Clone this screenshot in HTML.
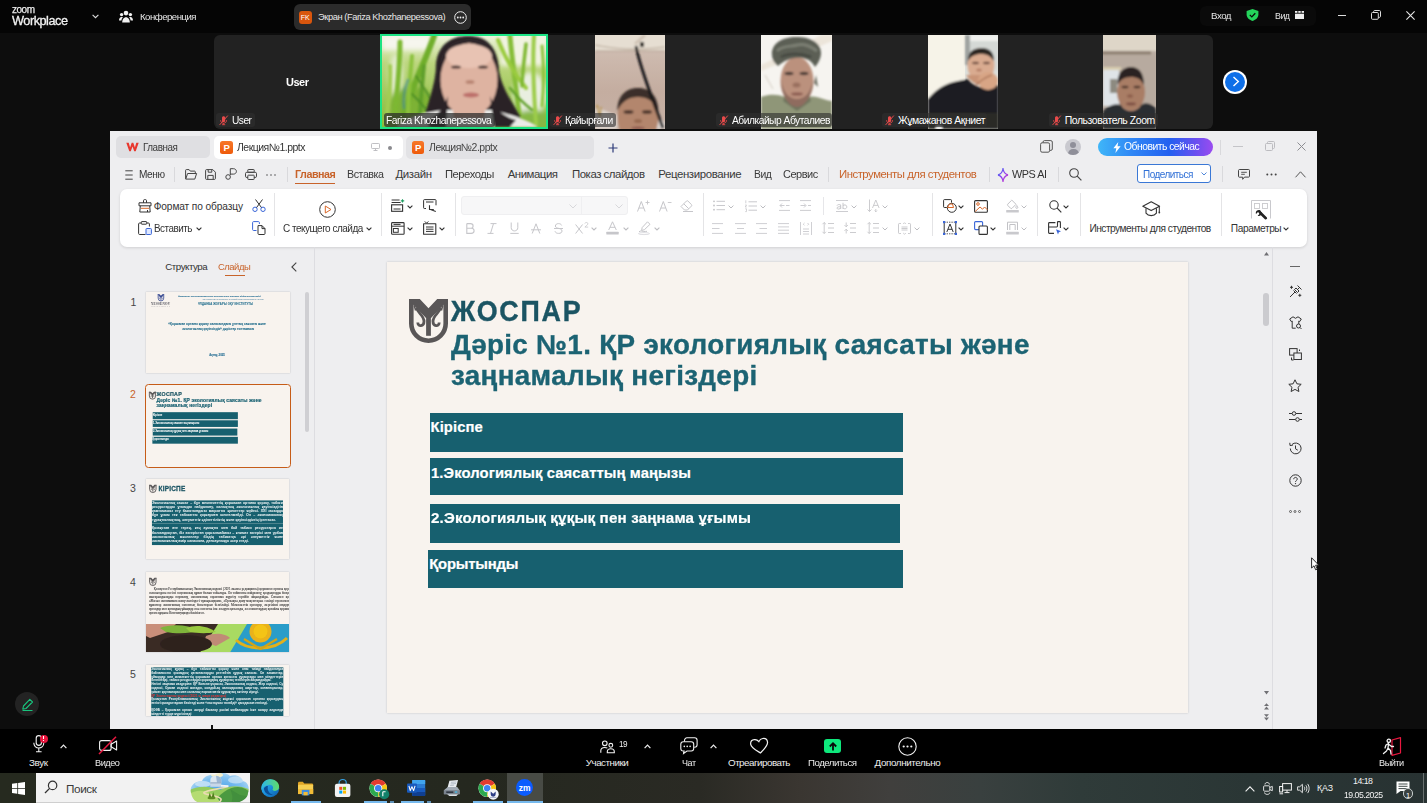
<!DOCTYPE html>
<html lang="ru">
<head>
<meta charset="utf-8">
<title>Zoom Workplace</title>
<style>
*{box-sizing:border-box;margin:0;padding:0}
html,body{width:1427px;height:803px;overflow:hidden;background:#0d0d0d;font-family:"Liberation Sans",sans-serif}
#root{position:relative;width:1427px;height:803px;overflow:hidden;background:#0d0d0d}
.a{position:absolute}
.t{position:absolute;white-space:nowrap;line-height:1;display:block}
svg{position:absolute;overflow:visible}
#topbar{position:absolute;left:0;top:0;width:1427px;height:33px;background:#050505}
#strip{position:absolute;left:214px;top:35px;width:999px;height:94px;background:#222;border-radius:6px}
.vid{position:absolute;top:0;height:94px;overflow:hidden}
.nm{position:absolute;top:78px;height:14px;background:rgba(47,47,47,.62);border-radius:3px}
#wps{position:absolute;left:110px;top:131px;width:1207px;height:598px;background:#eeeef0;overflow:hidden}
#ribbon{position:absolute;left:10px;top:58px;width:1187px;height:58px;background:#fff;border-radius:7px;box-shadow:0 1px 3px rgba(0,0,0,.13)}
.vs{position:absolute;width:1px;background:#e4e4e6}
#ztb{position:absolute;left:0;top:729px;width:1427px;height:44px;background:#000}
#tb{position:absolute;left:0;top:773px;width:1427px;height:30px;background:linear-gradient(90deg,#262a1f 0,#25281f 480px,#2a2a24 700px,#3a3631 800px,#403f3d 890px,#39403f 980px,#2f3b39 1080px,#2a3635 1250px,#283232 1427px)}
.ul{position:absolute;top:28px;height:2px;background:#76b9ed}
.th{position:absolute;left:146px;width:143.500px;height:80.500px;background:#f8f3ee;overflow:hidden;box-shadow:0 0 1.500px rgba(0,0,0,.22)}
.th>.in{position:absolute;left:0;top:0;width:800px;height:450px;transform:scale(.18);transform-origin:0 0}
.th .p{position:absolute;white-space:nowrap;line-height:1}
.th .blk{position:absolute;background:#17606f;color:#eef4f5;font-weight:700;font-size:19.500px;line-height:23.800px;text-align:justify;overflow:hidden;-webkit-text-stroke:.15px #eef4f5}
.th .blk p{text-align-last:left}

</style>
</head>
<body>
<div id="root">
<div id="topbar">
<svg style="left:92px;top:14px" width="7" height="5" viewBox="0 0 7 5"><path d="M.6.8 3.5 3.7 6.4.8" fill="none" stroke="#ddd" stroke-width="1.1"/></svg>
<svg style="left:119px;top:10px" width="14" height="13" viewBox="0 0 14 13"><g fill="#f2f2f2"><circle cx="7" cy="3.1" r="2.3"/><circle cx="2.6" cy="4.6" r="1.7"/><circle cx="11.4" cy="4.6" r="1.7"/><path d="M3.2 12.6c0-3 1.5-5.300 3.800-5.300s3.800 2.300 3.800 5.300z"/><path d="M0 10.500c0-2.100 1-3.600 2.600-3.600.500 0 .9.100 1.300.4-.9 1-1.400 2.200-1.500 3.200z"/><path d="M14 10.500c0-2.100-1-3.600-2.600-3.600-.5 0-.9.100-1.300.4.900 1 1.400 2.200 1.500 3.200z"/></g></svg>
<div class="a" style="left:294px;top:4px;width:177px;height:26px;background:#2b2b2b;border-radius:6px"></div>
<div class="a" style="left:299px;top:11px;width:12.5px;height:12.5px;background:#d9560d;border-radius:3px"></div>
<svg style="left:454px;top:10.500px" width="13" height="13" viewBox="0 0 13 13"><circle cx="6.500" cy="6.500" r="5.800" fill="none" stroke="#f0f0f0" stroke-width="1"/><g fill="#f0f0f0"><circle cx="3.800" cy="6.500" r=".9"/><circle cx="6.500" cy="6.500" r=".9"/><circle cx="9.200" cy="6.500" r=".9"/></g></svg>
<div class="a" style="left:1200px;top:6px;width:116px;height:20px;background:#0a0a0a;border-radius:6px"></div>
<svg style="left:1246px;top:9px" width="13" height="12" viewBox="0 0 13 12"><path d="M6.500 0 12.400 2v3.600c0 3-2.400 5.300-5.900 6.400C3 10.900.6 8.600.6 5.600V2z" fill="#24d35b"/><path d="M3.800 5.900 5.800 7.900 9.300 4.200" fill="none" stroke="#0a0a0a" stroke-width="1.300"/></svg>
<svg style="left:1295px;top:11px" width="9" height="8" viewBox="0 0 9 8"><g fill="#eee"><rect x="0" y="0" width="2.400" height="1.800"/><rect x="3.300" y="0" width="2.400" height="1.800"/><rect x="6.600" y="0" width="2.400" height="1.800"/><rect x="0" y="2.700" width="9" height="5.300"/></g></svg>
<div class="a" style="left:1338px;top:14.500px;width:8px;height:1px;background:#ddd"></div>
<svg style="left:1371px;top:10px" width="10" height="10" viewBox="0 0 10 10"><rect x=".5" y="2.500" width="6.800" height="6.800" rx="1" fill="none" stroke="#ddd"/><path d="M2.600 2.400V1.600c0-.6.500-1.100 1.100-1.100h4.700c.6 0 1.100.5 1.100 1.100v4.700c0 .6-.5 1.100-1.100 1.100h-.9" fill="none" stroke="#ddd"/></svg>
<svg style="left:1405.500px;top:10.500px" width="9" height="9" viewBox="0 0 9 9"><path d="M.4.400 8.600 8.600M8.600.4.400 8.600" stroke="#e8e8e8" stroke-width="1.100"/></svg>
</div>

<div id="strip">
<!-- tile 2: Fariza (active speaker) : strip-relative x 166..334 -->
<div class="a" style="left:166px;top:-1px;width:168px;height:95px;background:#1be384;overflow:hidden">
<svg style="left:2px;top:2px" width="164" height="91" viewBox="0 0 164 91">
<defs><filter id="b2" x="-10%" y="-10%" width="120%" height="120%"><feGaussianBlur stdDeviation="1.3"/></filter>
<filter id="b2b" x="-10%" y="-10%" width="120%" height="120%"><feGaussianBlur stdDeviation="2.600"/></filter>
<linearGradient id="g2" x1="0" y1="0" x2="0" y2="1"><stop offset="0" stop-color="#eef3dc"/><stop offset=".3" stop-color="#bcd67e"/><stop offset="1" stop-color="#86ba38"/></linearGradient>
<clipPath id="c2"><rect width="164" height="91"/></clipPath></defs>
<g clip-path="url(#c2)">
<rect width="164" height="91" fill="url(#g2)"/>
<g filter="url(#b2b)">
<rect x="0" y="0" width="48" height="14" fill="#f6f6ee"/>
<rect x="118" y="0" width="46" height="30" fill="#f1f3e2"/>
<ellipse cx="148" cy="58" rx="17" ry="22" fill="#e9efe0"/>
<ellipse cx="14" cy="40" rx="7" ry="22" fill="#e4ecd0"/>
<ellipse cx="30" cy="70" rx="22" ry="20" fill="#7db235"/>
<ellipse cx="150" cy="84" rx="18" ry="10" fill="#86b845"/>
</g>
<g filter="url(#b2)" stroke-linecap="round" fill="none">
<path d="M52 0C44 24 30 50 22 78" stroke="#6fae2c" stroke-width="6"/>
<path d="M18 6C18 30 16 50 12 88" stroke="#7db832" stroke-width="5"/>
<path d="M42 30C40 50 38 66 38 88" stroke="#5e9f2a" stroke-width="4"/>
<path d="M128 0C130 24 134 50 138 88" stroke="#86bd38" stroke-width="5"/>
<path d="M152 0C150 30 152 60 154 88" stroke="#9ccc4a" stroke-width="4"/>
<path d="M30 20C28 44 26 60 26 80" stroke="#8cc23e" stroke-width="4"/>
<path d="M8 30C9 50 6 66 4 88" stroke="#a2cc52" stroke-width="4"/>
<path d="M34 40C42 52 48 60 52 70" stroke="#4f8f25" stroke-width="2"/>
<path d="M30 58C36 64 42 70 46 76" stroke="#4f8f25" stroke-width="2"/>
<path d="M22 72C20 58 24 50 26 44" stroke="#3f86a0" stroke-width="2.500" opacity=".6"/>
<path d="M116 4C124 24 134 40 144 52" stroke="#9acb3c" stroke-width="4"/>
<path d="M144 8C142 26 140 40 140 50" stroke="#7fb832" stroke-width="3.500"/>
<path d="M160 10C162 30 162 50 160 70" stroke="#8dc23a" stroke-width="3"/>
<path d="M128 52C134 60 140 66 150 74" stroke="#5f9f2a" stroke-width="2.500"/>
</g>
<g filter="url(#b2)">
<path d="M40 91C44 70 54 50 54 28 56 8 70 0 86 0 104 0 114 10 116 28 118 50 128 62 138 80L140 91z" fill="#2a2226"/>
<path d="M14 91C26 80 44 76 62 74L110 74C126 78 142 82 156 91z" fill="#ecebe8"/>
<path d="M70 66 72 82 102 82 104 66z" fill="#d5a692"/>
<ellipse cx="87" cy="44" rx="28.500" ry="37" fill="#deb3a1"/>
<path d="M57 34C58 12 70 3 87 3 104 3 116 12 117 34 112 18 100 8 87 7 74 8 62 18 57 34z" fill="#2e2529"/>
<ellipse cx="87" cy="20" rx="23" ry="12" fill="#e8c3b3"/>
<ellipse cx="74" cy="31" rx="5" ry="1.600" fill="#4a3632"/>
<ellipse cx="101" cy="31" rx="5" ry="1.600" fill="#4a3632"/>
<ellipse cx="88" cy="46" rx="4.500" ry="2" fill="#b98573"/>
<ellipse cx="89" cy="59" rx="8" ry="2.600" fill="#bd6f6a"/>
<path d="M108 60C112 72 120 80 134 84L128 91 112 91z" fill="#2a2226"/>
<path d="M66 60C62 72 56 80 44 86L48 91 64 91z" fill="#2a2226"/>
</g>
</g>
</svg>
</div>
<!-- tile 3 video: abs x 594.5..665 => rel 380.5 -->
<div class="vid" style="left:380.500px;width:70.500px;background:#cdbbb0">
<svg style="left:0;top:0" width="70.500" height="94" viewBox="0 0 70.500 94">
<defs><filter id="b3" x="-10%" y="-10%" width="120%" height="120%"><feGaussianBlur stdDeviation=".9"/></filter>
<linearGradient id="g3" x1="0" y1="0" x2="0" y2="1"><stop offset="0" stop-color="#d2c1b6"/><stop offset=".6" stop-color="#c4ada0"/><stop offset="1" stop-color="#c6b1a5"/></linearGradient></defs>
<rect width="70.500" height="94" fill="url(#g3)"/>
<g filter="url(#b3)">
<rect x="-2" y="-2" width="75" height="18" fill="#e6ded2"/>
<path d="M0 10C20 14 40 16 70 12" stroke="#b5a595" stroke-width="1" fill="none"/>
<path d="M0 16H70.500" stroke="#bfae9f" stroke-width="1.500"/>
<path d="M50 0 40 9" stroke="#cfc2b4" stroke-width="3"/>
<rect x="45" y="7" width="4" height="5" fill="#2a2522"/>
<path d="M0 74C6 72 12 78 22 80L22 94 0 94z" fill="#dcd3cc"/>
<path d="M2 70 4 80M6 72 5 82" stroke="#b7913a" stroke-width="1.500"/>
<path d="M52 80C60 78 66 84 70.500 88V94H50z" fill="#dad2ce"/>
<ellipse cx="43" cy="82" rx="20.500" ry="27" fill="#b3866d"/>
<path d="M22.500 76C22 60 32 53 43 53 54 53 63 60 63.500 76 59 66 52 62 43 62 34 62 27 66 22.500 76z" fill="#3a2e29"/>
<ellipse cx="33.500" cy="77" rx="5" ry="1.900" fill="#4f382f"/>
<ellipse cx="52" cy="77" rx="5" ry="1.900" fill="#4f382f"/>
<ellipse cx="43" cy="86" rx="4" ry="2" fill="#96694f"/>
<ellipse cx="43" cy="93" rx="7" ry="1.500" fill="#8e5a50"/>
<path d="M41 11C44 30 56 60 68 93" stroke="#141318" stroke-width="2.800" fill="none"/>
</g>
</svg>
</div>
<!-- tile 4 video: abs 761..832 => rel 547 -->
<div class="vid" style="left:547px;width:71px;background:#f4f1ed">
<svg style="left:0;top:0" width="71" height="94" viewBox="0 0 71 94">
<defs><filter id="b4" x="-10%" y="-10%" width="120%" height="120%"><feGaussianBlur stdDeviation=".9"/></filter></defs>
<rect width="71" height="94" fill="#f6f4f0"/>
<g filter="url(#b4)">
<path d="M0 36 30 24 71 6V0H60L0 30z" fill="#ece5da"/>
<path d="M4 40 12 54" stroke="#cfc8bd" stroke-width="1"/>
<path d="M0 62C10 58 20 60 24 62L48 62C56 60 64 66 71 66V94H0z" fill="#8f9678"/>
<path d="M22 66 36 76 50 66 48 60 24 60z" fill="#6f755e"/>
<ellipse cx="36" cy="46" rx="16.500" ry="24" fill="#bb917d"/>
<path d="M20 44C20 60 28 72 36 72 44 72 52 60 52 44 50 58 44 64 36 64 28 64 22 58 20 44z" fill="#8f6c5e"/>
<path d="M11 20C10 8 22 2 35 2 50 2 60 8 60 18 60 24 56 30 54 32 50 24 42 22 34 23 26 24 20 28 17 31 13 28 11 24 11 20z" fill="#5c5f55"/>
<path d="M16 16C22 10 30 12 36 10 44 8 50 12 56 16" stroke="#7c7f73" stroke-width="3" fill="none"/>
<path d="M20 22C28 18 40 18 50 22" stroke="#44473f" stroke-width="2.500" fill="none"/>
<ellipse cx="28" cy="38.500" rx="4.500" ry="1.700" fill="#4a3a34"/>
<ellipse cx="43" cy="38.500" rx="4.500" ry="1.700" fill="#4a3a34"/>
<ellipse cx="35.500" cy="50" rx="4" ry="2.500" fill="#9a6f5e"/>
<ellipse cx="36" cy="59" rx="6" ry="1.600" fill="#8a5a50"/>
<path d="M53 48 57 52 55 40z" fill="#6d6f63"/>
</g>
</svg>
</div>
<!-- tile 5 video: abs 927.5..998 => rel 713.5 -->
<div class="vid" style="left:713.500px;width:70.500px;background:#e6e3da">
<svg style="left:0;top:0" width="70.500" height="94" viewBox="0 0 70.500 94">
<defs><filter id="b5" x="-10%" y="-10%" width="120%" height="120%"><feGaussianBlur stdDeviation=".9"/></filter></defs>
<rect width="37" height="94" fill="#f5f1e6"/>
<rect x="37" width="34" height="94" fill="#dcdfdb"/>
<g filter="url(#b5)">
<rect x="0" y="0" width="36" height="70" fill="#f6f3e8"/>
<rect x="37" y="0" width="5" height="30" fill="#9fa3a0"/>
<rect x="42" y="0" width="29" height="6" fill="#f0f1ee"/>
<rect x="42" y="6" width="29" height="30" fill="#d5d9d6"/>
<ellipse cx="53" cy="30" rx="13.500" ry="17" fill="#d9ab90"/>
<path d="M40 26C40 16 46 13 54 13 62 13 66 18 66 26 62 20 58 19 53 19 47 19 43 21 40 26z" fill="#2c2624"/>
<ellipse cx="47.500" cy="28" rx="3.500" ry="1.200" fill="#6b4a3c"/>
<ellipse cx="58.500" cy="28" rx="3.500" ry="1.200" fill="#6b4a3c"/>
<ellipse cx="51" cy="35" rx="2.800" ry="1.600" fill="#b57e66"/>
<path d="M0 64C8 54 18 48 30 46L40 44C44 50 52 54 60 52L70.500 50V94H0z" fill="#1f1f22"/>
<path d="M38 40C42 46 50 52 58 50L56 40z" fill="#c99477"/>
<ellipse cx="60" cy="46" rx="10" ry="9" fill="#d8a585"/>
<path d="M48 50C52 46 58 42 64 40" stroke="#b07a5f" stroke-width="1.500" fill="none"/>
<rect x="0" y="78" width="70.500" height="16" fill="#2a2b26"/>
<rect x="8" y="91" width="6" height="3" fill="#e8e8e8"/>
</g>
</svg>
</div>
<!-- tile 6 video: abs 1103..1156 => rel 889 -->
<div class="vid" style="left:889px;width:53px;background:#b8ab9f">
<svg style="left:0;top:0" width="53" height="94" viewBox="0 0 53 94">
<defs><filter id="b6" x="-10%" y="-10%" width="120%" height="120%"><feGaussianBlur stdDeviation=".8"/></filter></defs>
<rect width="53" height="94" fill="#b9aca1"/>
<g filter="url(#b6)">
<rect x="-2" y="-2" width="57" height="18" fill="#ded6c8"/>
<rect x="-2" y="16" width="50" height="3.500" fill="#8f8172"/>
<rect x="0" y="20" width="53" height="50" fill="#b7aa9f"/>
<rect x="0" y="32" width="18" height="3" fill="#d8cdb0"/>
<rect x="0" y="35" width="16" height="36" fill="#dfe4e8"/>
<rect x="7" y="44" width="7" height="14" fill="#8d8a80"/>
<ellipse cx="28" cy="57" rx="14" ry="19" fill="#a97d65"/>
<path d="M14.500 50C14 38 20 32 28 32 36 32 41 38 41 50 38 44 34 42 28 42 21 42 17 45 14.500 50z" fill="#2a2321"/>
<ellipse cx="22" cy="52" rx="3.500" ry="1.300" fill="#4a3329"/>
<ellipse cx="34" cy="52" rx="3.500" ry="1.300" fill="#4a3329"/>
<ellipse cx="27" cy="61" rx="3" ry="1.800" fill="#8d5f4c"/>
<ellipse cx="28" cy="69" rx="5" ry="1.400" fill="#7c4d42"/>
<path d="M0 76C6 70 12 68 18 70 22 78 34 78 38 70 44 66 50 70 53 74V94H0z" fill="#2b2d33"/>
</g>
</svg>
</div>
<!-- name labels -->
<div class="nm" style="left:2px;width:39px"></div>
<div class="nm" style="left:169.500px;width:111px;background:rgba(40,40,40,.72)"></div>
<div class="nm" style="left:335.500px;width:66.500px"></div>
<div class="nm" style="left:502px;width:116px"></div>
<div class="nm" style="left:668px;width:105px"></div>
<div class="nm" style="left:835px;width:109px"></div>
<svg style="left:5px;top:80px" width="10" height="10" viewBox="0 0 10 10"><path d="M4.600 1.200c-.9 0-1.600.7-1.600 1.600v2.600c0 .9.700 1.600 1.600 1.600s1.600-.7 1.600-1.600V2.800c0-.9-.7-1.600-1.600-1.600z" fill="#e84a4a"/><path d="M1.600 5.200c0 1.700 1.300 3 3 3s3-1.300 3-3M4.600 8.200v1.400M3 9.700h3.200" stroke="#e84a4a" stroke-width=".9" fill="none"/><path d="M.6 9.900 8.800.6" stroke="#e84a4a" stroke-width="1"/></svg>
<svg style="left:338.500px;top:80px" width="10" height="10" viewBox="0 0 10 10"><path d="M4.600 1.200c-.9 0-1.600.7-1.600 1.600v2.600c0 .9.700 1.600 1.600 1.600s1.600-.7 1.600-1.600V2.800c0-.9-.7-1.600-1.600-1.600z" fill="#e84a4a"/><path d="M1.600 5.200c0 1.700 1.300 3 3 3s3-1.300 3-3M4.600 8.200v1.400M3 9.700h3.200" stroke="#e84a4a" stroke-width=".9" fill="none"/><path d="M.6 9.900 8.800.6" stroke="#e84a4a" stroke-width="1"/></svg>
<svg style="left:505px;top:80px" width="10" height="10" viewBox="0 0 10 10"><path d="M4.600 1.200c-.9 0-1.600.7-1.600 1.600v2.600c0 .9.700 1.600 1.600 1.600s1.600-.7 1.600-1.600V2.800c0-.9-.7-1.600-1.600-1.600z" fill="#e84a4a"/><path d="M1.600 5.200c0 1.700 1.300 3 3 3s3-1.300 3-3M4.600 8.200v1.400M3 9.700h3.200" stroke="#e84a4a" stroke-width=".9" fill="none"/><path d="M.6 9.900 8.800.6" stroke="#e84a4a" stroke-width="1"/></svg>
<svg style="left:671px;top:80px" width="10" height="10" viewBox="0 0 10 10"><path d="M4.600 1.200c-.9 0-1.600.7-1.600 1.600v2.600c0 .9.700 1.600 1.600 1.600s1.600-.7 1.600-1.600V2.800c0-.9-.7-1.600-1.600-1.600z" fill="#e84a4a"/><path d="M1.600 5.200c0 1.700 1.300 3 3 3s3-1.300 3-3M4.600 8.200v1.400M3 9.700h3.200" stroke="#e84a4a" stroke-width=".9" fill="none"/><path d="M.6 9.900 8.800.6" stroke="#e84a4a" stroke-width="1"/></svg>
<svg style="left:838px;top:80px" width="10" height="10" viewBox="0 0 10 10"><path d="M4.600 1.200c-.9 0-1.600.7-1.600 1.600v2.600c0 .9.700 1.600 1.600 1.600s1.600-.7 1.600-1.600V2.800c0-.9-.7-1.600-1.600-1.600z" fill="#e84a4a"/><path d="M1.600 5.200c0 1.700 1.300 3 3 3s3-1.300 3-3M4.600 8.200v1.400M3 9.700h3.200" stroke="#e84a4a" stroke-width=".9" fill="none"/><path d="M.6 9.900 8.800.6" stroke="#e84a4a" stroke-width="1"/></svg>
</div>
<!-- next arrow -->
<div class="a" style="left:1223px;top:69.500px;width:24px;height:24px;border-radius:12px;background:#fff"></div>
<div class="a" style="left:1225px;top:71.500px;width:20px;height:20px;border-radius:10px;background:#0e6fe8"></div>
<svg style="left:1232px;top:76px" width="8" height="11" viewBox="0 0 8 11"><path d="M1.500 1 6.300 5.500 1.500 10" fill="none" stroke="#fff" stroke-width="1.400"/></svg>

<div id="wps">
<!-- tabs (coords relative to wps: abs-110, abs-131) -->
<div class="a" style="left:6px;top:5px;width:94px;height:22px;background:#dfdfe2;border-radius:5px"></div>
<svg style="left:15.500px;top:10.500px" width="13" height="10" viewBox="0 0 13 10"><path d="M.3.800 3.300 9.200 4.800 9.200 6.500 4.400 8.200 9.200 9.700 9.200 12.700.8 10.300.8 8.900 5.600 7.300.8 5.700.8 4.100 5.600 2.700.8z" fill="#e8382e"/></svg>
<div class="a" style="left:104px;top:5px;width:188.500px;height:23px;background:#fff;border-radius:5px"></div>
<div class="a" style="left:110.300px;top:10.300px;width:12.400px;height:12.400px;border-radius:2.500px;background:linear-gradient(180deg,#f7782a,#ee5a0a)"></div>
<svg style="left:261px;top:12px" width="9" height="8" viewBox="0 0 9 8"><rect x=".5" y=".5" width="8" height="5" rx=".8" fill="none" stroke="#b9b9bd" stroke-width=".9"/><path d="M2.500 7.500h4M4.500 5.500v2" stroke="#b9b9bd" stroke-width=".9"/></svg>
<div class="a" style="left:277.500px;top:14.500px;width:4px;height:4px;border-radius:2px;background:#8a8a8e"></div>
<div class="a" style="left:296px;top:5px;width:188px;height:22.500px;background:#e2e2e5;border-radius:5px"></div>
<div class="a" style="left:301.800px;top:10.300px;width:12.400px;height:12.400px;border-radius:2.500px;background:linear-gradient(180deg,#f7782a,#ee5a0a)"></div>
<svg style="left:497.500px;top:12px" width="10" height="10" viewBox="0 0 10 10"><path d="M5 .5v9M.5 5h9" stroke="#2c3a78" stroke-width="1.200"/></svg>
<!-- right top controls -->
<svg style="left:930px;top:9px" width="13" height="13" viewBox="0 0 13 13"><rect x=".6" y="2.800" width="9" height="9.400" rx="1.500" fill="none" stroke="#555" stroke-width="1"/><path d="M3 2.700V2c0-.8.600-1.400 1.400-1.400h6.500c.8 0 1.400.6 1.400 1.400v7c0 .8-.6 1.400-1.400 1.400h-1" fill="none" stroke="#555" stroke-width="1"/></svg>
<div class="a" style="left:955px;top:7.500px;width:16px;height:16px;border-radius:8px;background:#c9c9cf;overflow:hidden"><div class="a" style="left:5px;top:3px;width:6px;height:6.500px;border-radius:3px;background:#8f8f99"></div><div class="a" style="left:2.500px;top:10px;width:11px;height:9px;border-radius:5px 5px 0 0;background:#8f8f99"></div></div>
<div class="a" style="left:988px;top:7px;width:114.500px;height:18px;border-radius:9px;background:linear-gradient(90deg,#3fb6f8 0,#2f86f5 30%,#2360f0 62%,#6a4ff0 85%,#9a4cf0 100%)"></div>
<svg style="left:1003px;top:10.500px" width="8" height="11" viewBox="0 0 8 11"><path d="M5.300 0 .4 6.200h2.900L2.400 11l5.200-6.700H4.500z" fill="#fff"/></svg>
<div class="vs" style="left:1110px;top:9px;height:15px;background:#d9d9dc"></div>
<div class="a" style="left:1123px;top:15px;width:10px;height:1px;background:#c4c4c8"></div>
<svg style="left:1155px;top:10px" width="10" height="10" viewBox="0 0 10 10"><rect x=".5" y="2.500" width="7" height="7" rx="1" fill="none" stroke="#bcbcc0"/><path d="M2.500 2.400V1.500c0-.6.400-1 1-1h5c.6 0 1 .4 1 1v5c0 .6-.4 1-1 1h-.9" fill="none" stroke="#bcbcc0"/></svg>
<svg style="left:1186.500px;top:10.500px" width="9" height="9" viewBox="0 0 9 9"><path d="M.5.500 8.500 8.500M8.500.5.500 8.500" stroke="#8d8d92" stroke-width="1"/></svg>
<!-- menu row (abs y center 174.5 => rel 43.5) -->
<svg style="left:15px;top:38.500px" width="8" height="10" viewBox="0 0 8 10"><path d="M.3.800h7.400M.3 5h7.400M.3 9.200h7.400" stroke="#444" stroke-width="1"/></svg>
<div class="vs" style="left:64px;top:36px;height:15px;background:#d9d9dc"></div>
<svg style="left:74.500px;top:37.500px" width="12" height="11" viewBox="0 0 12 11"><path d="M.6 9.800V1.300c0-.4.300-.7.700-.7h2.800l1.200 1.500h4.300c.4 0 .7.300.7.700V4" fill="none" stroke="#444" stroke-width="1"/><path d="M.7 10.100 2.600 4.500h9l-1.800 5.600z" fill="none" stroke="#444" stroke-width="1" stroke-linejoin="round"/></svg>
<svg style="left:95px;top:37.500px" width="11" height="11" viewBox="0 0 11 11"><path d="M.6 1.400c0-.4.300-.8.800-.8h6.400l2.600 2.600v6.400c0 .4-.4.800-.8.800H1.400c-.5 0-.8-.4-.8-.8z" fill="none" stroke="#444" stroke-width="1"/><path d="M2.800 10.200V6.400h5.400v3.800M3.200.8v2.400h3.600V.8" fill="none" stroke="#444" stroke-width="1"/></svg>
<svg style="left:115px;top:37px" width="12" height="12" viewBox="0 0 12 12"><path d="M5.300 7.200V.7h3.200c1.600 0 2.900 1.200 2.900 2.700s-1.300 2.700-2.900 2.700H5.300" fill="none" stroke="#444" stroke-width="1"/><circle cx="3.100" cy="9" r="2.300" fill="none" stroke="#444" stroke-width="1"/></svg>
<svg style="left:135px;top:37.500px" width="12" height="11" viewBox="0 0 12 11"><rect x="2.800" y=".5" width="6.400" height="2.800" rx=".6" fill="none" stroke="#444"/><rect x=".5" y="3.300" width="11" height="5.200" rx="1.300" fill="none" stroke="#444"/><rect x="2.800" y="6.200" width="6.400" height="4.300" rx=".6" fill="#edeef0" stroke="#444"/></svg>
<svg style="left:156px;top:42.500px" width="10" height="2" viewBox="0 0 10 2"><g fill="#555"><circle cx="1" cy="1" r=".8"/><circle cx="5" cy="1" r=".8"/><circle cx="9" cy="1" r=".8"/></g></svg>
<div class="vs" style="left:177px;top:36px;height:15px;background:#d9d9dc"></div>
<div class="a" style="left:185px;top:51.500px;width:40px;height:1.500px;background:#c8632a"></div>
<div class="vs" style="left:717.500px;top:36px;height:15px;background:#d9d9dc"></div>
<div class="vs" style="left:879px;top:36px;height:15px;background:#d9d9dc"></div>
<svg style="left:888px;top:36.500px" width="10" height="14" viewBox="0 0 12 14" preserveAspectRatio="none"><defs><linearGradient id="ai" x1="0" y1="0" x2="1" y2="1"><stop offset="0" stop-color="#3a7bf0"/><stop offset=".5" stop-color="#8a3cf0"/><stop offset="1" stop-color="#e040c0"/></linearGradient></defs><path d="M6 0C6.300 3.500 7.500 6 12 7 7.500 8 6.300 10.500 6 14 5.700 10.500 4.500 8 0 7 4.500 6 5.700 3.500 6 0z" fill="none" stroke="url(#ai)" stroke-width="1.300"/></svg>
<div class="vs" style="left:948px;top:36px;height:15px;background:#d9d9dc"></div>
<svg style="left:959px;top:36.500px" width="13" height="13" viewBox="0 0 13 13"><circle cx="5" cy="5" r="4.300" fill="none" stroke="#444" stroke-width="1.100"/><path d="M8.200 8.200 12.400 12.400" stroke="#444" stroke-width="1.200"/></svg>
<div class="a" style="left:1027px;top:33px;width:74px;height:19px;border:1px solid #3a78d6;border-radius:3px;background:#fff"></div>
<svg style="left:1090.500px;top:41px" width="6" height="4" viewBox="0 0 6 4"><path d="M.5.500 3 3 5.500.5" fill="none" stroke="#3a78d6" stroke-width=".9"/></svg>
<div class="vs" style="left:1112px;top:35px;height:16px;background:#d9d9dc"></div>
<svg style="left:1127.500px;top:37.500px" width="12" height="11" viewBox="0 0 12 11"><path d="M1.300.5h9.400c.5 0 .8.400.8.800v6c0 .5-.4.800-.8.800H6.500L4.700 10.300V8.200H1.300c-.5 0-.8-.4-.8-.8v-6c0-.5.400-.8.800-.8z" fill="none" stroke="#444" stroke-width="1"/><path d="M3.200 3.300h5.600M3.200 5.300h3.600" stroke="#444" stroke-width=".9"/></svg>
<svg style="left:1156px;top:42px" width="11" height="3" viewBox="0 0 11 3"><g fill="#444"><circle cx="1.300" cy="1.500" r="1"/><circle cx="5.500" cy="1.500" r="1"/><circle cx="9.700" cy="1.500" r="1"/></g></svg>
<svg style="left:1184.500px;top:39.500px" width="11" height="7" viewBox="0 0 11 7"><path d="M.5 6.300 5.500.8 10.500 6.300" fill="none" stroke="#555" stroke-width="1"/></svg>
<!-- ribbon -->
<div id="ribbon">
<!-- group 1: clipboard -->
<svg style="left:17.500px;top:10px" width="14" height="14" viewBox="0 0 14 14"><path d="M5.500 3.800V1.600c0-.6.400-1 1-1h1c.6 0 1 .4 1 1v2.200" fill="none" stroke="#333" stroke-width="1"/><path d="M1 3.800h12v3H1z" fill="none" stroke="#333" stroke-width="1" stroke-linejoin="round"/><path d="M2.300 6.800 1.800 13h10.400l-.5-6.200" fill="none" stroke="#333" stroke-width="1"/><path d="M3 9.300h8" stroke="#d9682a" stroke-width="1"/><path d="M9.500 11v2" stroke="#333" stroke-width="1"/></svg>
<svg style="left:132px;top:10px" width="14" height="13" viewBox="0 0 14 13"><path d="M3.500.5 9.800 9M10.500.5 4.200 9" stroke="#333" stroke-width="1"/><circle cx="3" cy="10.300" r="2.200" fill="none" stroke="#3a66d8" stroke-width="1"/><circle cx="11" cy="10.300" r="2.200" fill="none" stroke="#3a66d8" stroke-width="1"/></svg>
<svg style="left:18px;top:32px" width="14" height="14" viewBox="0 0 14 14"><path d="M3.300 2H1.600c-.6 0-1 .4-1 1v9.500c0 .6.400 1 1 1h5.900M8.700 2h1.700c.6 0 1 .4 1 1v2.500" fill="none" stroke="#333" stroke-width="1"/><rect x="3.300" y=".6" width="5.400" height="2.600" rx=".6" fill="none" stroke="#333" stroke-width="1"/><rect x="8" y="7.500" width="5.400" height="6" rx=".8" fill="#dfe8ff" stroke="#3a66d8" stroke-width="1"/></svg>
<svg style="left:76px;top:38px" width="6" height="4" viewBox="0 0 6 4"><path d="M.6.600 3 3 5.400.6" fill="none" stroke="#333" stroke-width="1.100"/></svg>
<svg style="left:132px;top:32px" width="14" height="14" viewBox="0 0 14 14"><path d="M4.500 9.500H1.500c-.5 0-.9-.4-.9-.9V1.500c0-.5.400-.9.900-.9h5c.5 0 .9.400.9.900V3" fill="none" stroke="#3a66d8" stroke-width="1"/><path d="M6 4.600h4l3 3v5c0 .5-.4.900-.9.900H6.900c-.5 0-.9-.4-.9-.9z" fill="none" stroke="#333" stroke-width="1" stroke-linejoin="round"/><path d="M10 4.600v3h3" fill="none" stroke="#333" stroke-width="1"/></svg>
<div class="vs" style="left:153.500px;top:4px;height:43px"></div>
<!-- group 2: play -->
<svg style="left:199px;top:12px" width="17" height="17" viewBox="0 0 17 17"><circle cx="8.500" cy="8.500" r="7.800" fill="none" stroke="#333" stroke-width="1"/><path d="M6.300 5 12 8.500 6.300 12z" fill="none" stroke="#d9682a" stroke-width="1" stroke-linejoin="round"/></svg>
<svg style="left:245.500px;top:38px" width="6" height="4" viewBox="0 0 6 4"><path d="M.6.600 3 3 5.400.6" fill="none" stroke="#333" stroke-width="1.100"/></svg>
<div class="vs" style="left:261px;top:4px;height:43px"></div>
<!-- group 3: slides -->
<svg style="left:271px;top:10px" width="14" height="13" viewBox="0 0 14 13"><path d="M.6 1h8M.6 3.500h9" stroke="#333" stroke-width="1"/><rect x=".6" y="5.800" width="11" height="6.500" fill="none" stroke="#333" stroke-width="1.100"/><path d="M2.500 10h7" stroke="#333" stroke-width="1"/><path d="M11.500.2v3.400M9.800 1.900h3.400" stroke="#1d9e62" stroke-width="1.100"/></svg>
<svg style="left:287px;top:15.500px" width="6" height="4" viewBox="0 0 6 4"><path d="M.6.600 3 3 5.400.6" fill="none" stroke="#333" stroke-width="1.100"/></svg>
<svg style="left:302.500px;top:10px" width="14" height="13" viewBox="0 0 14 13"><path d="M3 9.500H1.300c-.4 0-.7-.3-.7-.7V1.300c0-.4.300-.7.700-.7h11c.4 0 .7.300.7.700v5" fill="none" stroke="#333" stroke-width="1"/><path d="M3 3h7.500" stroke="#333" stroke-width="1"/><path d="M6.500 6.200v4.300h4.300M6.800 10.200l6 2.200" fill="none" stroke="#333" stroke-width="1.100"/></svg>
<svg style="left:271px;top:32.500px" width="14" height="13" viewBox="0 0 14 13"><rect x=".6" y=".6" width="12.500" height="11.600" rx=".8" fill="none" stroke="#333" stroke-width="1.100"/><path d="M.6 4.200h12.500M2.500 2.400h7" stroke="#333" stroke-width="1"/><rect x="2.400" y="6.500" width="4.800" height="3.800" fill="none" stroke="#333" stroke-width="1"/></svg>
<svg style="left:287px;top:38px" width="6" height="4" viewBox="0 0 6 4"><path d="M.6.600 3 3 5.400.6" fill="none" stroke="#333" stroke-width="1.100"/></svg>
<svg style="left:302.500px;top:32px" width="14" height="14" viewBox="0 0 14 14"><path d="M1.800.4 3.600 2.200 5.400.4" fill="none" stroke="#333" stroke-width="1"/><path d="M.6 2.800h12.200v10.500H.6z" fill="none" stroke="#333" stroke-width="1.100" stroke-linejoin="round"/><path d="M3 6h7.500M3 8.200h7.500M3 10.400h7.500" stroke="#333" stroke-width="1"/></svg>
<svg style="left:318.500px;top:38px" width="6" height="4" viewBox="0 0 6 4"><path d="M.6.600 3 3 5.400.6" fill="none" stroke="#333" stroke-width="1.100"/></svg>
<div class="vs" style="left:334.500px;top:4px;height:43px"></div>
<!-- group 4: font (disabled) -->
<div class="a" style="left:341px;top:7px;width:167px;height:19px;background:#f7f7f8;border:1px solid #efeff1;border-radius:3px"></div>
<div class="vs" style="left:460.500px;top:8px;height:17px;background:#efeff1"></div>
<svg style="left:449px;top:14.500px" width="8" height="5" viewBox="0 0 8 5"><path d="M.5.500 4 4 7.500.5" fill="none" stroke="#d8d8db" stroke-width="1"/></svg>
<svg style="left:495px;top:14.500px" width="8" height="5" viewBox="0 0 8 5"><path d="M.5.500 4 4 7.500.5" fill="none" stroke="#d8d8db" stroke-width="1"/></svg>
<g></g>
<svg style="left:516.500px;top:11px" width="13" height="12" viewBox="0 0 13 12"><path d="M.5 11.500 4.300 1.500 8.100 11.500M1.800 8h5" fill="none" stroke="#c6c6ca" stroke-width="1"/><path d="M10.500.5v4M8.500 2.500h4" stroke="#c6c6ca" stroke-width=".9"/></svg>
<svg style="left:538.500px;top:11px" width="13" height="12" viewBox="0 0 13 12"><path d="M.5 11.500 4.300 1.500 8.100 11.500M1.800 8h5" fill="none" stroke="#c6c6ca" stroke-width="1"/><path d="M8.800 2.500h3.700" stroke="#c6c6ca" stroke-width=".9"/></svg>
<svg style="left:559.500px;top:11px" width="14" height="12" viewBox="0 0 14 12"><path d="M1 6.500 6.500 1c.4-.4 1-.4 1.400 0l3.600 3.600c.4.400.4 1 0 1.400L7.500 10H4.500z" fill="none" stroke="#c6c6ca" stroke-width="1" stroke-linejoin="round"/><path d="M3.800 3.800 8.700 8.700M3 11.500h10" stroke="#c6c6ca" stroke-width="1"/></svg>
<svg style="left:345.500px;top:33.500px" width="9" height="11" viewBox="0 0 9 11"><path d="M.8.600V10.400h4.400c1.700 0 2.900-1 2.900-2.600S6.900 5.300 5.200 5.300H.8M.8.600h3.700c1.500 0 2.600.9 2.600 2.300S6 5.300 4.500 5.300" fill="none" stroke="#c6c6ca" stroke-width="1.100"/></svg>
<svg style="left:367px;top:33.500px" width="10" height="11" viewBox="0 0 10 11"><path d="M3.500.6h6M.5 10.400h6M6.500.6 3.500 10.400" stroke="#c6c6ca" stroke-width="1"/></svg>
<svg style="left:389.500px;top:33px" width="9" height="12" viewBox="0 0 9 12"><path d="M1.200.5v5.200c0 1.900 1.400 3.200 3.300 3.200s3.300-1.300 3.300-3.200V.5M.3 11.400h8.400" fill="none" stroke="#c6c6ca" stroke-width="1"/></svg>
<svg style="left:411px;top:33.500px" width="10" height="11" viewBox="0 0 10 11"><path d="M1.200 10.500 5 .8 8.800 10.500M0 6.800h10" fill="none" stroke="#c6c6ca" stroke-width="1"/></svg>
<svg style="left:433.500px;top:33.500px" width="9" height="11" viewBox="0 0 9 11"><path d="M7.600 2.400C7.200 1.200 6 .6 4.500.6 2.700.6 1.400 1.500 1.400 3c0 3.200 6.600 1.500 6.600 5 0 1.600-1.400 2.400-3.400 2.400-1.800 0-3.100-.7-3.600-2.100M0 5.500h9" fill="none" stroke="#c6c6ca" stroke-width="1"/></svg>
<svg style="left:454.500px;top:33px" width="14" height="12" viewBox="0 0 14 12"><path d="M.6 2.500 7.600 11.500M7.600 2.500.6 11.500" stroke="#c6c6ca" stroke-width="1"/><path d="M9.800 1.500c.3-.7.900-1 1.600-1 .9 0 1.500.5 1.500 1.300 0 1.200-1.700 1.700-3 3.300h3.300" fill="none" stroke="#c6c6ca" stroke-width=".8"/></svg>
<svg style="left:470.500px;top:38px" width="6" height="4" viewBox="0 0 6 4"><path d="M.6.600 3 3 5.400.6" fill="none" stroke="#bdbdc1" stroke-width="1.100"/></svg>
<svg style="left:485.500px;top:32px" width="13" height="14" viewBox="0 0 13 14"><path d="M2.700 9 6.500.8 10.300 9M4 6.300h5" fill="none" stroke="#c6c6ca" stroke-width="1"/><rect x=".3" y="10.800" width="12.400" height="2.600" rx=".5" fill="#c6c6ca"/></svg>
<svg style="left:502.500px;top:38px" width="6" height="4" viewBox="0 0 6 4"><path d="M.6.600 3 3 5.400.6" fill="none" stroke="#bdbdc1" stroke-width="1.100"/></svg>
<svg style="left:518px;top:32px" width="14" height="14" viewBox="0 0 14 14"><path d="M9.500.8 12 3.300 6.300 8.800 3.600 9.400 4.200 6.500z" fill="none" stroke="#c6c6ca" stroke-width="1" stroke-linejoin="round"/><path d="M1 10.800c1.600-1.500 3-.5 4.200-.2 1.500.4 3-.6 3.800-.3" fill="none" stroke="#c6c6ca" stroke-width="1"/><ellipse cx="6" cy="12.600" rx="5.500" ry="1" fill="none" stroke="#d6d6da" stroke-width=".8"/></svg>
<svg style="left:533.500px;top:38px" width="6" height="4" viewBox="0 0 6 4"><path d="M.6.600 3 3 5.400.6" fill="none" stroke="#bdbdc1" stroke-width="1.100"/></svg>
<div class="vs" style="left:582.500px;top:4px;height:43px"></div>
<!-- group 5: paragraph (disabled) -->
<svg style="left:593px;top:11px" width="12" height="11" viewBox="0 0 12 11"><g fill="#c2c2c6"><circle cx="1" cy="1.300" r=".9"/><circle cx="1" cy="5.500" r=".9"/><circle cx="1" cy="9.700" r=".9"/></g><path d="M3.500 1.300H12M3.500 5.500H12M3.500 9.700H12" stroke="#c9c9cd" stroke-width="1"/></svg>
<svg style="left:608px;top:15.500px" width="6" height="4" viewBox="0 0 6 4"><path d="M.6.600 3 3 5.400.6" fill="none" stroke="#bdbdc1" stroke-width="1"/></svg>
<svg style="left:625px;top:10.500px" width="12" height="12" viewBox="0 0 12 12"><path d="M.8.300v3M.2 5h1.400L.2 7h1.500M.2 8.800h1.300v2.800H.2" stroke="#c2c2c6" stroke-width=".7" fill="none"/><path d="M3.500 1.800H12M3.500 6H12M3.500 10.200H12" stroke="#c9c9cd" stroke-width="1"/></svg>
<svg style="left:639.500px;top:15.500px" width="6" height="4" viewBox="0 0 6 4"><path d="M.6.600 3 3 5.400.6" fill="none" stroke="#bdbdc1" stroke-width="1"/></svg>
<svg style="left:658.500px;top:11px" width="11" height="11" viewBox="0 0 11 11"><path d="M0 .6h11M0 10.400h11M1 5.500h4.500M7 5.500h3.500M3 3.500 1 5.500 3 7.500" stroke="#cdcdd1" stroke-width="1" fill="none"/></svg>
<svg style="left:680px;top:11px" width="11" height="11" viewBox="0 0 11 11"><path d="M0 .6h11M0 10.400h11M.5 5.500h5M8 5.500h3M4 3.500 6 5.500 4 7.500" stroke="#cdcdd1" stroke-width="1" fill="none"/></svg>
<div class="vs" style="left:703px;top:8px;height:18px;background:#e6e6e9"></div>
<svg style="left:716px;top:10.500px" width="12" height="12" viewBox="0 0 12 12"><path d="M0 .5h12M0 11.500h12" stroke="#cdcdd1" stroke-width="1"/><path d="M4.600 5.200c-.5-.9-3.300-.9-3.600.4M4.700 9V5.600c0-.5-.2-.9-.6-1M4.700 6.800c-1.200-.2-3.900 0-3.700 1.400.2 1.300 3 1.200 3.700-.4M7 2.800V9M7 5.700c.6-1.200 3.800-1.200 3.800 1.100 0 2.400-3.200 2.400-3.800 1.100" fill="none" stroke="#c2c2c6" stroke-width=".9"/></svg>
<svg style="left:730.500px;top:15.500px" width="6" height="4" viewBox="0 0 6 4"><path d="M.6.600 3 3 5.400.6" fill="none" stroke="#bdbdc1" stroke-width="1"/></svg>
<svg style="left:747px;top:10px" width="13" height="13" viewBox="0 0 13 13"><path d="M2.500.5v12M.5 10.500l2 2 2-2M5.500 9 8.800 1 12.100 9M6.600 6.400h4.400M8.800 10v2.700M7.600 11.600l1.200 1.200 1.200-1.200" fill="none" stroke="#c6c6ca" stroke-width=".9"/></svg>
<svg style="left:762px;top:15.500px" width="6" height="4" viewBox="0 0 6 4"><path d="M.6.600 3 3 5.400.6" fill="none" stroke="#bdbdc1" stroke-width="1"/></svg>
<svg style="left:592px;top:33.500px" width="11" height="11" viewBox="0 0 11 11"><path d="M0 .6h11M0 5.500h7.500M0 10.400h11" stroke="#cfcfd3" stroke-width="1"/></svg>
<svg style="left:614.500px;top:33.500px" width="11" height="11" viewBox="0 0 11 11"><path d="M0 .6h11M2 5.500h7M0 10.400h11" stroke="#cfcfd3" stroke-width="1"/></svg>
<svg style="left:636px;top:33.500px" width="11" height="11" viewBox="0 0 11 11"><path d="M0 .6h11M3.500 5.500H11M0 10.400h11" stroke="#cfcfd3" stroke-width="1"/></svg>
<svg style="left:658px;top:33.500px" width="11" height="11" viewBox="0 0 11 11"><path d="M0 .6h11M0 3.900h11M0 7.200h11M0 10.400h11" stroke="#cfcfd3" stroke-width="1"/></svg>
<svg style="left:680px;top:32.500px" width="12" height="13" viewBox="0 0 12 13"><path d="M.5 0v13M11.500 0v13M3 7h6M3 9.500h6M3 12h6M4.500 1 3.300 2.200 4.500 3.400M7.500 1 8.700 2.200 7.500 3.400" fill="none" stroke="#cbcbcf" stroke-width=".9"/></svg>
<svg style="left:702px;top:33px" width="12" height="12" viewBox="0 0 12 12"><path d="M2.200.5v11M.5 2.200 2.200.5l1.700 1.700M.5 9.800l1.700 1.700 1.700-1.700M6 1.500h6M6 6h6M6 10.500h6" fill="none" stroke="#c6c6ca" stroke-width=".9"/></svg>
<svg style="left:724px;top:33px" width="12" height="12" viewBox="0 0 12 12"><path d="M2.200.5v4.300M.5 3.100l1.700 1.700 1.700-1.700M2.200 11.500V7.200M.5 8.900l1.700-1.700 1.700 1.700M6 1.500h6M6 6h6M6 10.500h6" fill="none" stroke="#c6c6ca" stroke-width=".9"/></svg>
<svg style="left:747px;top:33px" width="12" height="12" viewBox="0 0 12 12"><path d="M2.200.5v11M.5 2.200 2.200.5l1.700 1.700M.5 9.800l1.700 1.700 1.700-1.700M6 1.500h6M6 6h6M6 10.500h6" fill="none" stroke="#c6c6ca" stroke-width=".9"/></svg>
<svg style="left:762px;top:38px" width="6" height="4" viewBox="0 0 6 4"><path d="M.6.600 3 3 5.400.6" fill="none" stroke="#bdbdc1" stroke-width="1"/></svg>
<svg style="left:778px;top:32.500px" width="13" height="13" viewBox="0 0 13 13"><path d="M3 1.500H1.200c-.4 0-.7.300-.7.700v8.600c0 .4.300.7.700.7H3M10 1.500h1.800c.4 0 .7.300.7.700v8.600c0 .4-.3.700-.7.700H10M3.500 5h6M3.500 6.500h6M3.500 8h6M5.200 2 6.500.7 7.800 2M5.200 11l1.300 1.300L7.800 11" fill="none" stroke="#c6c6ca" stroke-width=".9"/></svg>
<svg style="left:793.500px;top:38px" width="6" height="4" viewBox="0 0 6 4"><path d="M.6.600 3 3 5.400.6" fill="none" stroke="#bdbdc1" stroke-width="1"/></svg>
<div class="vs" style="left:812px;top:4px;height:43px"></div>
<!-- group 6: drawing -->
<svg style="left:823px;top:10px" width="14" height="14" viewBox="0 0 14 14"><path d="M8.500 3.600V1.300c0-.4-.3-.7-.7-.7H1.300c-.4 0-.7.300-.7.700v6.500c0 .4.300.7.700.7h2.500" fill="none" stroke="#333" stroke-width="1"/><circle cx="8.800" cy="8.800" r="4.500" fill="none" stroke="#333" stroke-width="1"/><path d="M4.500 8.500 6.500 5h3l1 3.500z" fill="none" stroke="#d9682a" stroke-width="1" stroke-linejoin="round"/></svg>
<svg style="left:838px;top:15.500px" width="6" height="4" viewBox="0 0 6 4"><path d="M.6.600 3 3 5.400.6" fill="none" stroke="#333" stroke-width="1.100"/></svg>
<svg style="left:854px;top:10.500px" width="14" height="13" viewBox="0 0 14 13"><rect x=".6" y=".6" width="12.800" height="11.600" rx="1" fill="none" stroke="#333" stroke-width="1.100"/><circle cx="4" cy="4" r="1.300" fill="none" stroke="#d9682a" stroke-width="1"/><path d="M1.200 11.500 6 7l2.500 2.200L10.600 7l2.800 2.800" fill="none" stroke="#d9682a" stroke-width="1"/></svg>
<svg style="left:886px;top:9.500px" width="13" height="14" viewBox="0 0 13 14"><path d="M5.500.8 10 5.300 6 9.300c-.4.400-1 .4-1.400 0L1.800 6.500c-.4-.4-.4-1 0-1.400L5.500 1.400M10.800 6.500c.6.900 1 1.500 1 2s-.4.900-1 .9-1-.4-1-.9.400-1.100 1-2z" fill="none" stroke="#c2c2c6" stroke-width="1"/><rect x=".2" y="11" width="12.600" height="2.600" rx=".5" fill="#c9c9cd"/></svg>
<svg style="left:901px;top:15.500px" width="6" height="4" viewBox="0 0 6 4"><path d="M.6.600 3 3 5.400.6" fill="none" stroke="#bdbdc1" stroke-width="1"/></svg>
<svg style="left:823px;top:32px" width="14" height="14" viewBox="0 0 14 14"><path d="M1.200 1.200h11.600M1.200 12.800h11.600" stroke="#333" stroke-width=".8" stroke-dasharray="1.400 1"/><path d="M1.200 1.200v11.600M12.800 1.200v11.600" stroke="#333" stroke-width="1"/><path d="M3.800 11 7 3l3.200 8M5 8.300h4" fill="none" stroke="#333" stroke-width="1"/><g fill="#3a66d8"><rect x="0" y="0" width="2.200" height="2.200"/><rect x="11.800" y="0" width="2.200" height="2.200"/><rect x="0" y="11.800" width="2.200" height="2.200"/><rect x="11.800" y="11.800" width="2.200" height="2.200"/></g></svg>
<svg style="left:838px;top:38px" width="6" height="4" viewBox="0 0 6 4"><path d="M.6.600 3 3 5.400.6" fill="none" stroke="#333" stroke-width="1.100"/></svg>
<svg style="left:854px;top:32px" width="14" height="14" viewBox="0 0 14 14"><rect x=".6" y=".6" width="8" height="8" rx="1" fill="none" stroke="#3a66d8" stroke-width="1.100"/><rect x="5" y="5" width="8.400" height="8.400" rx="1" fill="#fff" stroke="#333" stroke-width="1.100"/></svg>
<svg style="left:870px;top:38px" width="6" height="4" viewBox="0 0 6 4"><path d="M.6.600 3 3 5.400.6" fill="none" stroke="#333" stroke-width="1.100"/></svg>
<svg style="left:886px;top:32px" width="13" height="14" viewBox="0 0 13 14"><path d="M1.500 9V1.200h10V9M3.800 9V3.500h5.400V9" fill="none" stroke="#c2c2c6" stroke-width="1"/><rect x=".2" y="10.800" width="12.600" height="2.600" rx=".5" fill="#c9c9cd"/></svg>
<svg style="left:901px;top:38px" width="6" height="4" viewBox="0 0 6 4"><path d="M.6.600 3 3 5.400.6" fill="none" stroke="#bdbdc1" stroke-width="1"/></svg>
<div class="vs" style="left:917px;top:4px;height:43px"></div>
<!-- group 7: find -->
<svg style="left:928.500px;top:10.500px" width="13" height="13" viewBox="0 0 13 13"><circle cx="5" cy="5" r="4.200" fill="none" stroke="#333" stroke-width="1.100"/><path d="M8.200 8.200 12.300 12.300" stroke="#333" stroke-width="1.200"/></svg>
<svg style="left:943px;top:15.500px" width="6" height="4" viewBox="0 0 6 4"><path d="M.6.600 3 3 5.400.6" fill="none" stroke="#333" stroke-width="1.100"/></svg>
<svg style="left:928px;top:32px" width="14" height="14" viewBox="0 0 14 14"><path d="M6 12.400H1.400c-.4 0-.8-.4-.8-.8V2.400c0-.4.400-.8.800-.8h6M.6 6h8c.5 0 .9-.4.900-.9V.5M9.500.6h2.100c.4 0 .8.400.8.800V7" fill="none" stroke="#333" stroke-width="1.100"/><path d="M8 8.300 13 10.300 10.800 11.200 10 13.500z" fill="#3a66d8"/></svg>
<svg style="left:943px;top:38px" width="6" height="4" viewBox="0 0 6 4"><path d="M.6.600 3 3 5.400.6" fill="none" stroke="#333" stroke-width="1.100"/></svg>
<div class="vs" style="left:959.500px;top:4px;height:43px"></div>
<!-- group 8: student tools -->
<svg style="left:1021.500px;top:12px" width="19" height="16" viewBox="0 0 19 16"><path d="M.8 5.200 9.200.8l8.400 4.400-8.400 4.400z" fill="none" stroke="#333" stroke-width="1.100" stroke-linejoin="round"/><path d="M4 7.200v5c1.200 1.600 3 2.400 5.200 2.400s4-.8 5.200-2.400v-5" fill="none" stroke="#333" stroke-width="1.100"/><path d="M17.300 5.500v5.500" stroke="#333" stroke-width="1"/><circle cx="17.300" cy="11.500" r=".9" fill="#333"/></svg>
<div class="vs" style="left:1101px;top:4px;height:43px"></div>
<!-- group 9: params -->
<svg style="left:1130.500px;top:10.500px" width="20" height="19" viewBox="0 0 20 19"><path d="M.5 18.500V.5h19v18" fill="none" stroke="#c9c9cd" stroke-width="1"/><rect x="3.500" y="3.500" width="5" height="5" fill="none" stroke="#c9c9cd" stroke-width=".9"/><rect x="11.500" y="3.500" width="5" height="5" fill="none" stroke="#c9c9cd" stroke-width=".9"/><path d="M9.200 10.200c-1.200-.5-2.600-.3-3.500.6-.9.900-1.100 2.200-.7 3.300l2-2 1.700 1.700-2 2c1.100.5 2.400.2 3.300-.7.600-.6.900-1.400.9-2.200" fill="#222"/><path d="M9.500 13 14.800 18.200" stroke="#222" stroke-width="2.600" stroke-linecap="round"/></svg>
<svg style="left:1163px;top:38px" width="6" height="4" viewBox="0 0 6 4"><path d="M.6.600 3 3 5.400.6" fill="none" stroke="#333" stroke-width="1.100"/></svg>
</div>

</div>

<!-- sidebar / main separators -->
<div class="a" style="left:314px;top:247px;width:1px;height:482px;background:#dddde1"></div>
<div class="a" style="left:1272px;top:247px;width:1px;height:482px;background:#dddde1"></div>
<!-- sidebar header -->
<div class="a" style="left:224.500px;top:274.700px;width:20px;height:1.300px;background:#c8632a"></div>
<svg style="left:290.500px;top:261.500px" width="6" height="10" viewBox="0 0 6 10"><path d="M5.300.6.900 5 5.300 9.400" fill="none" stroke="#444" stroke-width="1.100"/></svg>
<div class="a" style="left:305px;top:292px;width:4px;height:140px;border-radius:2px;background:#cfcfd3"></div>
<!-- slide -->
<div class="a" style="left:387px;top:262px;width:801px;height:451px;background:#f8f3ee;box-shadow:0 0 2px rgba(0,0,0,.18)"></div>
<svg style="left:409px;top:298.500px" width="39" height="44.500" viewBox="0 0 39 44.500"><g fill="none" stroke="#595657" stroke-linejoin="miter">
<path d="M2.300 1V24.500A17.200 17.200 0 0 0 36.700 24.500V1" stroke-width="4.600"/>
<path d="M19.500 15V36.800" stroke-width="4.800"/>
<path d="M7.500 9C9 14.500 15 16.500 15 22.500 15 27.500 8.800 28 8.800 23.500" stroke-width="2.800"/>
<path d="M31.500 9C30 14.500 24 16.500 24 22.500 24 27.500 30.200 28 30.200 23.500" stroke-width="2.800"/>
<path d="M5.300 6.500 6.600 11.500M33.700 6.500 32.400 11.500" stroke-width="1.500"/>
</g><path d="M0 0H10.800L19.500 9.200 28.200 0H39V4.500H36L22 19H17L3 4.500H0z" fill="#595657"/></svg>
<div class="a" style="left:430px;top:412.500px;width:473px;height:39.300px;background:#17606f"></div>
<div class="a" style="left:430px;top:458px;width:473px;height:37.400px;background:#17606f"></div>
<div class="a" style="left:430px;top:504px;width:470px;height:38.700px;background:#17606f"></div>
<div class="a" style="left:428px;top:550.200px;width:475px;height:37.400px;background:#17606f"></div>
<!-- main scrollbar -->
<div class="a" style="left:1263px;top:293px;width:6px;height:33px;border-radius:3px;background:#cbcbcf"></div>
<svg style="left:1263.500px;top:252px" width="5" height="3.500" viewBox="0 0 6 4"><path d="M0 4 3 0 6 4z" fill="#707074"/></svg>
<svg style="left:1263.500px;top:690.500px" width="5" height="3.500" viewBox="0 0 6 4"><path d="M0 0 3 4 6 0z" fill="#707074"/></svg>
<svg style="left:1263.500px;top:702.500px" width="5" height="7" viewBox="0 0 6 8"><path d="M0 3.500 3 0 6 3.500zM0 7.500 3 4 6 7.500z" fill="#707074"/></svg>
<svg style="left:1263.500px;top:714px" width="5" height="7" viewBox="0 0 6 8"><path d="M0 0 3 3.500 6 0zM0 4 3 7.500 6 4z" fill="#707074"/></svg>
<!-- right panel icons -->
<div class="a" style="left:1290px;top:266px;width:10px;height:1px;background:#666"></div>
<svg style="left:1288.500px;top:284.500px" width="13" height="13" viewBox="0 0 13 13"><g fill="none" stroke="#333" stroke-width="1"><path d="M1 12 6 7M4.500 5.500 7.500 8.500M7 3 10 6 8.500 7.500 5.500 4.500z"/><path d="M8.500.5 12.500 4.500M10.500 2.500 9 4"/><path d="M2.500.8v3M1 2.300h3M10.800 8.800v3M9.300 10.300h3"/></g></svg>
<svg style="left:1288.500px;top:316px" width="13" height="13" viewBox="0 0 13 13"><g fill="none" stroke="#333" stroke-width="1" stroke-linejoin="round"><path d="M4 .8 6.500 2.300 9 .8 12.300 3 10.800 5.500 9.800 5V8M3.200 5 2.200 5.500.7 3 4 .8M3.200 5v7.200h3.500"/><circle cx="9.500" cy="10" r="2"/><path d="M11 11.500 12.500 13"/></g></svg>
<svg style="left:1288.500px;top:347.500px" width="13" height="13" viewBox="0 0 13 13"><g fill="none" stroke="#333" stroke-width="1"><rect x=".6" y=".6" width="7.500" height="6.500"/><rect x="4.900" y="5" width="7.500" height="6.500" fill="#edeef0"/><path d="M2.500 9.500v2.500h2M10.500 3V1.500"/></g></svg>
<svg style="left:1288px;top:378.500px" width="14" height="13" viewBox="0 0 14 13"><path d="M7 .8 8.900 4.800 13.200 5.300 10 8.300 10.900 12.500 7 10.400 3.100 12.500 4 8.300.8 5.300 5.100 4.800z" fill="none" stroke="#333" stroke-width="1" stroke-linejoin="round"/></svg>
<svg style="left:1288.500px;top:410.500px" width="13" height="11" viewBox="0 0 13 11"><g fill="none" stroke="#333" stroke-width="1"><path d="M0 2.500h3M7 2.500h6M0 8.500h6.500M10.500 8.500H13"/><circle cx="5" cy="2.500" r="1.800"/><circle cx="8.500" cy="8.500" r="1.800"/></g></svg>
<svg style="left:1288.500px;top:441.500px" width="13" height="13" viewBox="0 0 13 13"><g fill="none" stroke="#333" stroke-width="1"><path d="M1.300 6.500A5.400 5.400 0 1 0 3 2.500"/><path d="M.8.800 1 3.500 3.800 3.200M6.500 3.500V6.800L8.800 8.200"/></g></svg>
<svg style="left:1288.500px;top:473.500px" width="13" height="13" viewBox="0 0 13 13"><g fill="none" stroke="#333" stroke-width="1"><circle cx="6.500" cy="6.500" r="5.700"/><path d="M4.700 5.200c0-1 .8-1.800 1.800-1.800s1.800.8 1.800 1.700c0 1.300-1.800 1.400-1.800 2.700"/></g><circle cx="6.500" cy="9.600" r=".7" fill="#333"/></svg>
<svg style="left:1289px;top:509.500px" width="12" height="3" viewBox="0 0 12 3"><g fill="none" stroke="#444" stroke-width=".8"><circle cx="1.500" cy="1.500" r="1"/><circle cx="6" cy="1.500" r="1"/><circle cx="10.500" cy="1.500" r="1"/></g></svg>
<!-- window bottom tick -->
<div class="a" style="left:211px;top:725px;width:1.500px;height:4px;background:#111"></div>

<!-- thumb 1 -->
<div class="th" style="top:292px"><div class="in">
<svg style="left:60px;top:12px" width="46" height="40" viewBox="0 0 39 44.500"><g fill="none" stroke="#33468f"><path d="M2.300 1V24.500A17.200 17.200 0 0 0 36.700 24.500V1" stroke-width="5"/><path d="M19.500 15V36.800" stroke-width="5"/><path d="M7.500 9C9 14.500 15 16.500 15 22.500 15 27.500 8.800 28 8.800 23.500M31.500 9C30 14.500 24 16.500 24 22.500 24 27.500 30.200 28 30.200 23.500" stroke-width="3.400"/></g><path d="M0 0H10.800L19.500 9.200 28.200 0H39V4.500H36L22 19H17L3 4.500H0z" fill="#33468f"/></svg>
<span class="p" style="left:28px;top:58px;font:700 18px 'Liberation Serif',serif;color:#4b4b55;letter-spacing:1.300px">YESSENOV</span>
<span class="p" style="left:30px;top:78px;font:400 9px 'Liberation Serif',serif;color:#6b6b75;letter-spacing:5.600px">UNIVERSITY</span>
<span class="p" style="left:178px;top:18px;font:700 13.500px 'Liberation Sans',sans-serif;color:#2a7196;-webkit-text-stroke:.5px #2a7196">Қазақстан Республикасының Ғылым және жоғары білім министрлігі</span>
<span class="p" style="left:312px;top:37px;font:700 11.500px 'Liberation Sans',sans-serif;color:#5a8aa6">«Ш. ЕСЕНОВ АТЫНДАҒЫ КАСПИЙ ТЕХНОЛОГИЯЛАР ЖӘНЕ</span>
<span class="p" style="left:290px;top:58px;font:700 15.500px 'Liberation Sans',sans-serif;color:#1d6a8a;letter-spacing:.6px;-webkit-text-stroke:.3px #1d6a8a">ҰЛДАНБА ЖОҒАРЫ ОҚУ ИНСТИТУТЫ</span>
<span class="p" style="left:124px;top:167px;font:700 17.500px 'Liberation Sans',sans-serif;color:#1d6a8a;-webkit-text-stroke:.4px #1d6a8a">«Қоршаған ортаны қорғау саласындағы ұлттық саясаты және</span>
<span class="p" style="left:202px;top:196px;font:700 17.500px 'Liberation Sans',sans-serif;color:#1d6a8a;-webkit-text-stroke:.4px #1d6a8a">экологиялық қауіпсіздік» дәрістер топтамасы</span>
<span class="p" style="left:352px;top:343px;font:700 15.500px 'Liberation Sans',sans-serif;color:#2a7196;-webkit-text-stroke:.6px #2a7196">Ақтау, 2025</span>
</div></div>
<!-- thumb 2 (selected) -->
<div class="a" style="left:144.500px;top:383.500px;width:146.500px;height:84px;border:1.700px solid #c65c18;border-radius:3.500px;background:#f8f3ee"></div>
<div class="th" style="top:385.500px;left:146.500px;width:142.500px;height:80px;box-shadow:none;background:none"><div class="in" style="left:-1.100px;top:-.5px">
<svg style="left:22px;top:36.500px" width="39" height="44.500" viewBox="0 0 39 44.500"><g fill="none" stroke="#595657"><path d="M2.300 1V24.500A17.200 17.200 0 0 0 36.700 24.500V1" stroke-width="5"/><path d="M19.500 15V36.800" stroke-width="5"/><path d="M7.500 9C9 14.500 15 16.500 15 22.500 15 27.500 8.800 28 8.800 23.500M31.500 9C30 14.500 24 16.500 24 22.500 24 27.500 30.200 28 30.200 23.500" stroke-width="3.400"/></g><path d="M0 0H10.800L19.500 9.200 28.200 0H39V4.500H36L22 19H17L3 4.500H0z" fill="#595657"/></svg>
<span class="p" style="left:63.600px;top:34px;font:700 29.500px 'Liberation Sans',sans-serif;color:#1b5463;letter-spacing:1.600px;-webkit-text-stroke:1.200px #1b5463">ЖОСПАР</span>
<span class="p" style="left:63.600px;top:68px;font:700 27.400px 'Liberation Sans',sans-serif;color:#1c6373;letter-spacing:.7px;-webkit-text-stroke:1.200px #1c6373">Дәріс №1. ҚР экологиялық саясаты және</span>
<span class="p" style="left:63.600px;top:99px;font:700 27.400px 'Liberation Sans',sans-serif;color:#1c6373;letter-spacing:.7px;-webkit-text-stroke:1.200px #1c6373">заңнамалық негіздері</span>
<div class="a" style="left:43px;top:150.500px;width:473px;height:39.300px;background:#17606f"></div>
<div class="a" style="left:43px;top:196px;width:473px;height:37.400px;background:#17606f"></div>
<div class="a" style="left:43px;top:242px;width:470px;height:38.700px;background:#17606f"></div>
<div class="a" style="left:41px;top:288.200px;width:475px;height:37.400px;background:#17606f"></div>
<span class="p" style="left:44px;top:157px;font:700 14.800px 'Liberation Sans',sans-serif;color:#fff;-webkit-text-stroke:.2px #fff">Кіріспе</span>
<span class="p" style="left:44px;top:204px;font:700 14.800px 'Liberation Sans',sans-serif;color:#fff;-webkit-text-stroke:.2px #fff">1.Экологиялық саясаттың маңызы</span>
<span class="p" style="left:44px;top:248px;font:700 14.800px 'Liberation Sans',sans-serif;color:#fff;-webkit-text-stroke:.2px #fff">2.Экологиялық құқық пен заңнама ұғымы</span>
<span class="p" style="left:42px;top:295px;font:700 14.800px 'Liberation Sans',sans-serif;color:#fff;-webkit-text-stroke:.2px #fff">Қорытынды</span>
</div></div>
<!-- thumb 3 -->
<div class="th" style="top:479px;left:146px;width:143px;height:80px"><div class="in">
<svg style="left:17px;top:32px" width="42" height="46" viewBox="0 0 39 44.500"><g fill="none" stroke="#595657"><path d="M2.300 1V24.500A17.200 17.200 0 0 0 36.700 24.500V1" stroke-width="5"/><path d="M19.500 15V36.800" stroke-width="5"/><path d="M7.500 9C9 14.500 15 16.500 15 22.500 15 27.500 8.800 28 8.800 23.500M31.500 9C30 14.500 24 16.500 24 22.500 24 27.500 30.200 28 30.200 23.500" stroke-width="3.400"/></g><path d="M0 0H10.800L19.500 9.200 28.200 0H39V4.500H36L22 19H17L3 4.500H0z" fill="#595657"/></svg>
<span class="p" style="left:70px;top:36px;font:700 36px 'Liberation Sans',sans-serif;color:#1b5463;letter-spacing:1px;-webkit-text-stroke:1.400px #1b5463">КІРІСПЕ</span>
<div class="blk" style="left:33px;top:119px;width:728px;height:128px"><p>Экологиялық саясат – бұл мемлекеттің қоршаған ортаны қорғау, табиғи ресурстарды ұтымды пайдалану, халықтың экологиялық қауіпсіздігін қамтамасыз ету бағытындағы мақсатты әрекеттер жүйесі. XXI ғасырда бұл ұғым тек табиғатты қорғаумен шектелмейді. Ол – экономикалық тұрақтылықтың, әлеуметтік әділеттіліктің және қауіпсіздіктің іргетасы.</p></div>
<div class="blk" style="left:33px;top:247px;width:728px;height:120px;padding-top:14px"><p style="text-align-last:left">Қазақстан өте терең, кең аумақты мен бай табиғи ресурстарға ие болғандықтан, біз өзгерістен қорғалмаймыз – климат өзгерісі мен урбан экологиялық мәселелер біздің табиғатқа әрі әлеуметтік және экономикалық өмір сапасына, денсаулыққа әсер етеді.</p></div>
</div></div>
<!-- thumb 4 -->
<div class="th" style="top:572px;left:146px;width:143px;height:80px"><div class="in">
<svg style="left:17px;top:32px" width="42" height="46" viewBox="0 0 39 44.500"><g fill="none" stroke="#595657"><path d="M2.300 1V24.500A17.200 17.200 0 0 0 36.700 24.500V1" stroke-width="5"/><path d="M19.500 15V36.800" stroke-width="5"/><path d="M7.500 9C9 14.500 15 16.500 15 22.500 15 27.500 8.800 28 8.800 23.500M31.500 9C30 14.500 24 16.500 24 22.500 24 27.500 30.200 28 30.200 23.500" stroke-width="3.400"/></g><path d="M0 0H10.800L19.500 9.200 28.200 0H39V4.500H36L22 19H17L3 4.500H0z" fill="#595657"/></svg>
<div class="a" style="left:16px;top:82px;width:800px;height:155px;font:400 17.500px/22.200px 'Liberation Serif',serif;color:#3d3d3d;text-align:justify;overflow:hidden;-webkit-text-stroke:.5px #3d3d3d">&nbsp;&nbsp;&nbsp;&nbsp;&nbsp;Қазақстан Республикасының Экологиялық кодексі (2021 жылғы редакциясы) қоршаған ортаны қорғау саласындағы негізгі заңнамалық құжат болып табылады. Ол табиғатты пайдалану, қалдықтарды басқару, шығарындыларды нормалау, экологиялық сараптама жүргізу тәртібін айқындайды. Сонымен қатар «Жасыл экономикаға көшу жөніндегі тұжырымдама», «Орнықты даму мақсаттары» секілді стратегиялық құжаттар экологиялық саясаттың бағыттарын белгілейді. Мемлекеттік органдар, жергілікті атқарушы органдар мен қоғамдық ұйымдар осы саясатты іске асыруға қатысады, ал азаматтардың қолайлы қоршаған ортаға құқығы Конституцияда бекітілген.</div>
</div>
<svg style="left:0;top:51.500px" width="143.500" height="28.500" viewBox="0 0 143.500 28.500">
<defs><filter id="b7" x="-5%" y="-5%" width="110%" height="110%"><feGaussianBlur stdDeviation=".7"/></filter><clipPath id="c7"><rect width="143.500" height="28.500"/></clipPath></defs>
<g clip-path="url(#c7)"><rect width="143.500" height="28.500" fill="#3a2b24"/>
<g filter="url(#b7)">
<path d="M96 0H143.500V28.500H74z" fill="#2a9dc9"/>
<path d="M54 28.500H84L101 0H72z" fill="#a9da62"/>
<path d="M0 0H30L22 8 4 14 0 12z" fill="#c98f7a"/>
<path d="M14 4C24 0 40 0 54 6 44 10 30 10 20 8z" fill="#7fb53a"/>
<path d="M40 4C50 0 62 2 70 8 60 10 50 9 44 8z" fill="#9acb3f"/>
<path d="M60 12C70 8 80 10 84 14L70 22 58 18z" fill="#c08b76"/>
<ellipse cx="40" cy="20" rx="26" ry="9" fill="#2e221e"/>
<circle cx="114.500" cy="7.500" r="11" fill="#e9b21a"/>
<circle cx="114.500" cy="7.500" r="7" fill="#f4c414"/>
<path d="M90 16C102 27 128 27 141 14" fill="none" stroke="#e2b01a" stroke-width="3"/>
<path d="M98 15 114.500 25 131 15" fill="none" stroke="#d3a416" stroke-width="2.200"/>
</g></g></svg>
</div>
<!-- thumb 5 -->
<div class="th" style="top:665px;left:146px;width:143px;height:51px"><div class="in">
<div class="blk" style="left:29px;top:13px;width:734px;height:300px;font-size:17.300px;line-height:20.800px"><p>Экологиялық құқық – бұл табиғатты қорғау және оны тиімді пайдалануға байланысты қоғамдық қатынастарды реттейтін құқық саласы. Ол азаматтар, ұйымдар мен мемлекеттің қоршаған ортаға қатысты құқықтары мен міндеттерін белгілейді, табиғи ресурстарды қорғаудың құқықтық тетіктерін айқындайды.</p><p>Негізгі заңнама көздеріне: ҚР Конституциясы, Экологиялық кодекс, Жер кодексі, Су кодексі, Орман кодексі жатады, сондай-ақ халықаралық шарттар, конвенциялар, үкімет қаулылары мен салалық нормативтік құқықтық актілер кіреді.</p><p style="color:#d63a3a;-webkit-text-stroke:.3px #d63a3a">ҚР Экологиялық кодексі (2021 ж. жаңа редакция)</p><p>Қазақстан Республикасының Экологиялық кодексі қоршаған ортаны қорғаудың негізгі қағидаттарын бекітеді және «ластаушы төлейді» қағидасын енгізеді.</p><p style="padding-top:20px">ҚОӘБ – Қоршаған ортаға әсерді бағалау рәсімі жобаларды іске асыру алдында міндетті түрде жүргізіледі</p></div>
</div></div>

<div id="ztb">
<!-- coords rel: x abs, y abs-729 -->
<svg style="left:33px;top:6px" width="12" height="18" viewBox="0 0 12 18"><rect x="3.200" y=".6" width="5.200" height="9.800" rx="2.600" fill="none" stroke="#f2f2f2" stroke-width="1.100"/><path d="M.8 7.800c0 3 2.200 5.200 5 5.200s5-2.200 5-5.200M5.800 13v3.500M3 16.800h5.600" fill="none" stroke="#f2f2f2" stroke-width="1.100"/></svg>
<div class="a" style="left:39.500px;top:5.500px;width:8px;height:8px;border-radius:4px;background:#e8173f"></div>
<div class="a" style="left:43px;top:7.200px;width:1.200px;height:3px;background:#fff"></div>
<div class="a" style="left:43px;top:10.900px;width:1.200px;height:1.200px;background:#fff"></div>
<svg style="left:59.500px;top:15px" width="7" height="5" viewBox="0 0 7 5"><path d="M.6 4.200 3.500 1.200 6.400 4.200" fill="none" stroke="#eee" stroke-width="1.200"/></svg>
<svg style="left:98px;top:7px" width="21" height="19" viewBox="0 0 21 19"><rect x="1.600" y="4.600" width="11.500" height="9.800" rx="2" fill="none" stroke="#f2f2f2" stroke-width="1.100"/><path d="M13.100 8.200 18.600 5v9l-5.500-3.200z" fill="none" stroke="#f2f2f2" stroke-width="1.100" stroke-linejoin="round"/><path d="M1 18 18 .8" stroke="#e8173f" stroke-width="1.500"/></svg>
<svg style="left:600px;top:11px" width="15" height="14" viewBox="0 0 15 14"><g fill="none" stroke="#f2f2f2" stroke-width="1.100"><circle cx="4.800" cy="3.300" r="2.300"/><path d="M.8 12.800v-2c0-2 1.600-3.300 4-3.300 1 0 1.800.2 2.500.6"/><circle cx="10.800" cy="5.300" r="1.900"/><path d="M7.300 12.800v-1c0-1.800 1.400-3 3.500-3s3.500 1.200 3.500 3v1z"/></g></svg>
<svg style="left:643.500px;top:15px" width="7" height="5" viewBox="0 0 7 5"><path d="M.6 4.200 3.500 1.200 6.400 4.200" fill="none" stroke="#eee" stroke-width="1.200"/></svg>
<svg style="left:680px;top:8px" width="18" height="17" viewBox="0 0 18 17"><g fill="none" stroke="#f2f2f2" stroke-width="1.100"><path d="M4.500 4.500V3.300c0-1.400 1.100-2.500 2.500-2.500h7.600c1.400 0 2.500 1.100 2.500 2.500v4.400c0 1.400-1.100 2.500-2.500 2.500h-.4"/><path d="M3.300 4.700h7.900c1.400 0 2.500 1.100 2.500 2.500v4.300c0 1.400-1.100 2.500-2.500 2.500H7l-3.400 2.400.5-2.400h-.8C1.900 14 .8 12.900.8 11.500V7.200c0-1.400 1.100-2.500 2.500-2.500z"/></g><g fill="#f2f2f2"><circle cx="4.300" cy="9.400" r=".8"/><circle cx="7.200" cy="9.400" r=".8"/><circle cx="10.100" cy="9.400" r=".8"/></g></svg>
<svg style="left:710px;top:15px" width="7" height="5" viewBox="0 0 7 5"><path d="M.6 4.200 3.500 1.200 6.400 4.200" fill="none" stroke="#eee" stroke-width="1.200"/></svg>
<svg style="left:750px;top:8.500px" width="19" height="16" viewBox="0 0 19 16"><path d="M9.500 15C5 11.500 1 8.800 1 5.200 1 2.800 2.800 1 5.200 1c1.700 0 3.300.9 4.300 2.600C10.500 1.900 12.100 1 13.800 1 16.200 1 18 2.800 18 5.200c0 3.600-4 6.300-8.500 9.800z" fill="none" stroke="#f2f2f2" stroke-width="1.200" transform="rotate(-8 9.500 8)"/></svg>
<div class="a" style="left:823.500px;top:10px;width:17.500px;height:13.500px;border-radius:3px;background:#0ee87c"></div>
<svg style="left:827.500px;top:12.500px" width="10" height="9" viewBox="0 0 10 9"><path d="M5 8.500V2M1.800 4.500 5 1.200 8.200 4.500" fill="none" stroke="#0a0a0a" stroke-width="1.800"/></svg>
<svg style="left:898px;top:7.500px" width="19" height="19" viewBox="0 0 19 19"><circle cx="9.500" cy="9.500" r="8.700" fill="none" stroke="#f2f2f2" stroke-width="1.100"/><g fill="#f2f2f2"><circle cx="5.700" cy="9.500" r="1.100"/><circle cx="9.500" cy="9.500" r="1.100"/><circle cx="13.300" cy="9.500" r="1.100"/></g></svg>
<svg style="left:1381.500px;top:7.500px" width="20" height="19" viewBox="0 0 20 19"><path d="M10 3 18.500.6V16l-8.500 2.400z" fill="none" stroke="#e8173f" stroke-width="1.200" stroke-linejoin="round"/><g fill="none" stroke="#f2f2f2" stroke-width="1.300" stroke-linecap="round" stroke-linejoin="round"><circle cx="6.800" cy="3.800" r="1.700"/><path d="M6.500 6.500 4 8 3 11M6.500 6.500 6 11 8.500 13.500 9 17M6 11 4.500 14 1.500 16.500M7 7.500 9.500 9.500 11.500 9.500"/></g></svg>
</div>
<!-- pencil button -->
<div class="a" style="left:15px;top:692px;width:24px;height:24px;border-radius:12px;background:#232323"></div>
<svg style="left:20.500px;top:697.500px" width="13" height="13" viewBox="0 0 13 13"><path d="M8.800 1.300 11.500 4 5 10.500 1.800 11.200 2.500 8z" fill="none" stroke="#19c37d" stroke-width="1.100" stroke-linejoin="round"/><path d="M1.500 12.500h10" stroke="#19c37d" stroke-width="1"/></svg>
<!-- mouse cursor -->
<svg style="left:1310.500px;top:557px" width="9" height="14" viewBox="0 0 9 14"><path d="M.6.800V11L3 8.800 4.700 12.800 6.300 12.100 4.600 8.200H7.800z" fill="#fff" stroke="#111" stroke-width=".9" stroke-linejoin="round"/></svg>

<div id="tb">
<!-- rel y = abs-773 -->
<svg style="left:12px;top:8.500px" width="13" height="13" viewBox="0 0 13 13"><g fill="#fff"><path d="M0 1.800 5.300 1.100V6H0zM6.100 1 13 0V6H6.100zM0 6.800H5.300V11.800L0 11.100zM6.100 6.800H13V13L6.100 12z"/></g></svg>
<div class="a" style="left:36px;top:0;width:214px;height:30px;background:#f2f2f2;overflow:hidden;border-bottom:1px solid #cfcfcf">
<svg style="left:8px;top:7px" width="14" height="14" viewBox="0 0 14 14"><circle cx="8.600" cy="5.400" r="4.200" fill="none" stroke="#333" stroke-width="1.200"/><path d="M5.600 8.400 1 13" stroke="#333" stroke-width="1.300"/></svg>
<svg style="left:154px;top:0" width="60" height="29.500" viewBox="0 0 60 29.500">
<defs><filter id="b8" x="-5%" y="-5%" width="110%" height="110%"><feGaussianBlur stdDeviation=".55"/></filter>
<radialGradient id="sk" cx=".5" cy=".55" r=".6"><stop offset="0" stop-color="#4aa2ea"/><stop offset=".6" stop-color="#7fc0f0"/><stop offset="1" stop-color="#cfe6f6"/></radialGradient>
<clipPath id="c8"><path d="M1 20C-1 13 5 8 12 8 14 3 20 1 25 2 28 -1 36 -1 40 3 46 1 52 4 53 8 58 9 60 15 58 20 58 26 50 30 44 30H12C5 30 2 25 1 20z"/></clipPath></defs>
<g clip-path="url(#c8)"><g filter="url(#b8)">
<rect x="-2" y="-2" width="64" height="34" fill="url(#sk)"/>
<ellipse cx="13" cy="11" rx="8" ry="3" fill="#cfe6f6" opacity=".8"/><ellipse cx="46" cy="7" rx="8" ry="3.500" fill="#c9e3f6" opacity=".75"/><ellipse cx="27" cy="2" rx="6" ry="2.500" fill="#f3edc8"/>
<path d="M-2 18C8 12 20 13 30 17 40 12 52 12 62 18V32H-2z" fill="#93cb5c"/>
<path d="M22 32C28 22 38 14 48 14 54 14 60 18 62 22V32z" fill="#4c9a40"/>
<path d="M-2 22C6 16 16 17 24 22 30 26 30 30 28 32H-2z" fill="#b5dc72"/>
<path d="M40 16 50 22 62 24V32H40C44 26 42 20 40 16z" fill="#3f8a3a" opacity=".7"/>
<path d="M38 13.500C30 16 16 17 14 19.500 13 22 30 22.500 31 26 31.500 28 29 29 28 31" fill="none" stroke="#eadbb2" stroke-width="1.700"/>
<path d="M20.300 7.500C20.300 1.300 31.300 1.300 31.300 7.500V10H20.300z" fill="#dde7f0"/>
<path d="M26 2.800C29.500 3 31.300 5 31.300 7.500V10H27z" fill="#9db6d2"/>
<rect x="20.300" y="9.600" width="11" height="4.200" fill="#c9d8e8"/><rect x="20.300" y="9.400" width="11" height="1" fill="#8fa6c0"/>
<path d="M31 11.800 38.500 12.300 38.500 14 31 13.800z" fill="#eef2f6"/>
<path d="M18.300 24.500 19.800 19.500 21.300 24.500zM21.500 25 23.200 19 24.900 25z" fill="#4f7d1e"/><ellipse cx="21.500" cy="25" rx="4" ry="1.300" fill="#5c8a24"/>
</g></g></svg>
</div>
<!-- Edge -->
<svg style="left:260.700px;top:5.800px" width="18.600" height="18.600" viewBox="0 0 20 20"><defs><linearGradient id="e1" x1="0" y1="0" x2="1" y2="1"><stop offset="0" stop-color="#35c1f1"/><stop offset=".5" stop-color="#1a8fdc"/><stop offset="1" stop-color="#0c59a4"/></linearGradient><linearGradient id="e2" x1="0" y1="0" x2="1" y2="0"><stop offset="0" stop-color="#2db7e8"/><stop offset="1" stop-color="#5fdc6a"/></linearGradient></defs><circle cx="10" cy="10" r="9.600" fill="url(#e1)"/><path d="M.5 9C1.200 4 5 .4 10 .4c5.300 0 9.500 3.600 9.500 8 0 2.600-2 4.400-4.500 4.400-1.500 0-2.600-.6-2.600-1.400 0-.6.600-.9.600-2 0-1.900-1.700-3.300-3.800-3.300C5.200 6.100 2 8.400.5 12z" fill="url(#e2)"/><path d="M7.200 9.500c-.2 3.400 2 6.500 5.600 7.500-4.600 1.400-9.800-2-9.600-7.200C4.400 8.200 6 7.500 7.500 7.600 7.300 8.200 7.200 8.800 7.200 9.500z" fill="#0c4f96"/></svg>
<!-- Explorer -->
<svg style="left:297.400px;top:7.600px" width="17.200" height="15.200" viewBox="0 0 20 18"><path d="M1 2.500c0-.8.700-1.500 1.500-1.500h4.200l1.800 2H17.500c.8 0 1.500.7 1.500 1.500V6H1z" fill="#e0a526"/><rect x="1" y="4.500" width="18" height="11" rx="1" fill="#f7cf52"/><rect x="1" y="9.500" width="18" height="6" fill="#f2bc36"/><rect x="5.500" y="10.500" width="9" height="6.500" fill="#3c8ce0"/><rect x="7.500" y="13" width="5" height="4" fill="#f2bc36"/></svg>
<div class="ul" style="left:291px;width:30px"></div>
<!-- Store -->
<svg style="left:333.700px;top:6px" width="17.300" height="18.700" viewBox="0 0 19 21"><path d="M5.500 5.500V4c0-2 1.700-3.400 4-3.400s4 1.400 4 3.400v1.500" fill="none" stroke="#36a3e8" stroke-width="1.300"/><rect x=".8" y="5.200" width="17.400" height="15" rx="2.300" fill="#f2f2f2"/><rect x="5.700" y="8.800" width="3.400" height="3.400" fill="#f25022"/><rect x="9.900" y="8.800" width="3.400" height="3.400" fill="#7fba00"/><rect x="5.700" y="13" width="3.400" height="3.400" fill="#00a4ef"/><rect x="9.900" y="13" width="3.400" height="3.400" fill="#ffb900"/></svg>
<!-- Chrome 1 -->
<svg style="left:369.300px;top:5.500px" width="22.100" height="21.200" viewBox="0 0 24 23"><circle cx="10" cy="10" r="9.500" fill="#fff"/><path d="M10 10 1.800 5.200A9.500 9.500 0 0 1 18.200 5.200z" fill="#e33b2e"/><path d="M10 10 18.200 5.200A9.500 9.500 0 0 1 10 19.500z" fill="#f7c613"/><path d="M10 10 10 19.500A9.500 9.500 0 0 1 1.800 5.200z" fill="#2da94f"/><circle cx="10" cy="10" r="4.400" fill="#fff"/><circle cx="10" cy="10" r="3.500" fill="#3e82f1"/><circle cx="16.500" cy="16.500" r="5.500" fill="#12806a"/><path d="M15 13.800h3M15 13.800v5" stroke="#fff" stroke-width="1.200" fill="none"/></svg>
<div class="ul" style="left:364px;width:23px"></div><div class="ul" style="left:390px;width:4px;background:#5d8fb5"></div>
<!-- Word -->
<svg style="left:406.600px;top:6.600px" width="18.200" height="16" viewBox="0 0 21 20" preserveAspectRatio="none"><rect x="6" y="0" width="15" height="20" rx="1.500" fill="#2b7cd3"/><rect x="6" y="0" width="15" height="5" fill="#41a5ee"/><rect x="6" y="10" width="15" height="5" fill="#185abd"/><rect x="6" y="15" width="15" height="5" fill="#103f91"/><rect x="0" y="4.500" width="11.500" height="11.500" rx="1.200" fill="#185abd"/><path d="M2.200 7.300 3.800 13.300 5.700 8.300 7.600 13.300 9.300 7.300" fill="none" stroke="#fff" stroke-width="1.200" stroke-linejoin="round"/></svg>
<div class="ul" style="left:401px;width:23px"></div><div class="ul" style="left:427px;width:4px;background:#5d8fb5"></div>
<!-- Printer/scan -->
<svg style="left:443px;top:6.600px" width="17.500" height="16.500" viewBox="0 0 22 21"><path d="M8 1 19 0 16 11 5 12z" fill="#e9edf2"/><path d="M10 3 17 2.500M9.500 5 16.500 4.500M9 7 14 6.500" stroke="#9aa5b3" stroke-width=".8"/><path d="M1 13 6 9H18L21 13V18H1z" fill="#a2abb5"/><path d="M1 13H21V18H1z" fill="#7a838e"/><rect x="4" y="14.500" width="9" height="2" fill="#2f3640"/><rect x="15" y="14.500" width="3" height="1.600" fill="#43c0f0"/><path d="M5 18 8 20.500H17L19 18z" fill="#d9dee4"/></svg>
<!-- Chrome 2 -->
<svg style="left:478.400px;top:5.500px" width="22.100" height="22.100" viewBox="0 0 24 24"><circle cx="10" cy="10" r="9.500" fill="#fff"/><path d="M10 10 1.800 5.200A9.500 9.500 0 0 1 18.200 5.200z" fill="#e33b2e"/><path d="M10 10 18.200 5.200A9.500 9.500 0 0 1 10 19.500z" fill="#f7c613"/><path d="M10 10 10 19.500A9.500 9.500 0 0 1 1.800 5.200z" fill="#2da94f"/><circle cx="10" cy="10" r="4.400" fill="#fff"/><circle cx="10" cy="10" r="3.500" fill="#3e82f1"/><circle cx="16.500" cy="16.500" r="6" fill="#f4f6fa"/><path d="M13.800 13.500v3a2.700 2.700 0 0 0 5.400 0v-3l-2.700 2.500z" fill="#2e3f86"/><path d="M13 20h7" stroke="#8a92b8" stroke-width=".8"/></svg>
<div class="ul" style="left:473px;width:30px"></div>
<!-- Zoom -->
<div class="a" style="left:507px;top:0;width:36px;height:30px;background:#484b45"></div>
<div class="a" style="left:515.800px;top:5.900px;width:17.400px;height:17.400px;border-radius:8.700px;background:#0b5cff"></div>
<div class="ul" style="left:507px;width:36px"></div>
<!-- tray -->
<svg style="left:1244.500px;top:12.500px" width="10" height="6" viewBox="0 0 10 6"><path d="M.6 5.400 5 .9 9.400 5.400" fill="none" stroke="#f2f2f2" stroke-width="1.100"/></svg>
<svg style="left:1263px;top:9px" width="10" height="13" viewBox="0 0 10 13"><g fill="none" stroke="#f2f2f2" stroke-width=".9"><path d="M2 2.500C2 1.300 3 .5 4.200.5S6.400 1.300 6.400 2.500"/><rect x=".6" y="3.800" width="6.200" height="5.400" rx="1"/><path d="M6.800 5.500 9.300 4.400V8.700L6.800 7.600"/><path d="M1.500 10.500c0 1.100 1.200 1.900 2.700 1.900s2.700-.8 2.700-1.900"/></g></svg>
<svg style="left:1279px;top:9.500px" width="13" height="12" viewBox="0 0 13 12"><g fill="none" stroke="#f2f2f2" stroke-width="1"><rect x="3.600" y=".6" width="8.800" height="6.500"/><path d="M8 7.100v2.300M5.500 9.600h5"/><rect x=".6" y="3.500" width="3" height="5.500" fill="#2d3937"/><path d="M.5 10.800h3.600"/></g></svg>
<svg style="left:1297px;top:10px" width="13" height="11" viewBox="0 0 13 11"><g fill="none" stroke="#f2f2f2" stroke-width=".9"><path d="M.6 3.800H2.700L5.400 1.300V9.700L2.700 7.200H.6z" stroke-linejoin="round"/><path d="M7.200 3.700c.7.900.7 2.700 0 3.600M8.900 2.300c1.300 1.700 1.300 4.700 0 6.400M10.600.9c2 2.500 2 6.700 0 9.200"/></g></svg>
<svg style="left:1396px;top:8px" width="14" height="13" viewBox="0 0 14 13"><path d="M.5.500H13.500V10H4.500L.5 13z" fill="#fff"/><path d="M2.500 3h9M2.500 5.300h9M2.500 7.600h9" stroke="#2a3634" stroke-width=".9"/></svg>
<div class="a" style="left:1402.500px;top:15px;width:10.500px;height:10.500px;border-radius:5.300px;background:#3a4140;border:1px solid #c9cfce"></div>
<div class="a" style="left:1423px;top:0;width:1px;height:30px;background:#69706f"></div>
</div>

<div id="txt">
<span class="t" style="left:12.00px;top:5.00px;font-size:10.35px;color:#eee;letter-spacing:-0.500px;transform:scaleX(0.9665);transform-origin:0 0;-webkit-text-stroke:.25px #eee;">zoom</span>
<span class="t" style="left:12.00px;top:14.00px;font-size:13.09px;color:#f2f2f2;letter-spacing:-0.500px;transform:scaleX(0.9731);transform-origin:0 0;-webkit-text-stroke:.3px #f2f2f2;">Workplace</span>
<span class="t" style="left:140.00px;top:12.00px;font-size:9.7px;color:#e8e8e8;letter-spacing:-0.500px;transform:scaleX(0.9899);transform-origin:0 0;">Конференция</span>
<span class="t" style="left:300.80px;top:14.00px;font-size:7.04px;color:#fff;">FK</span>
<span class="t" style="left:318.00px;top:13.00px;font-size:9.32px;color:#e6e6e6;letter-spacing:-0.436px;">Экран (Fariza Khozhanepessova)</span>
<span class="t" style="left:1211.00px;top:11.00px;font-size:9.97px;color:#e6e6e6;letter-spacing:-0.500px;transform:scaleX(0.9733);transform-origin:0 0;">Вход</span>
<span class="t" style="left:1274.70px;top:12.00px;font-size:9.12px;color:#e6e6e6;letter-spacing:-0.500px;transform:scaleX(0.9687);transform-origin:0 0;">Вид</span>
<span class="t" style="left:286.00px;top:77.00px;font-size:11.37px;color:#fff;font-weight:700;letter-spacing:-0.500px;transform:scaleX(0.9678);transform-origin:0 0;">User</span>
<span class="t" style="left:232.00px;top:116.00px;font-size:10.47px;color:#fff;letter-spacing:-0.500px;transform:scaleX(0.9704);transform-origin:0 0;">User</span>
<span class="t" style="left:385.50px;top:116.00px;font-size:10.47px;color:#fff;letter-spacing:-0.500px;transform:scaleX(0.9829);transform-origin:0 0;">Fariza Khozhanepessova</span>
<span class="t" style="left:565.00px;top:116.00px;font-size:10.47px;color:#fff;letter-spacing:-0.500px;transform:scaleX(0.9894);transform-origin:0 0;">Қайырғали</span>
<span class="t" style="left:731.60px;top:116.00px;font-size:10.47px;color:#fff;letter-spacing:-0.500px;transform:scaleX(0.9791);transform-origin:0 0;">Абилкайыр Абуталиев</span>
<span class="t" style="left:898.00px;top:116.00px;font-size:10.47px;color:#fff;letter-spacing:-0.452px;">Жұмажанов Ақниет</span>
<span class="t" style="left:1064.70px;top:116.00px;font-size:10.47px;color:#fff;letter-spacing:-0.438px;">Пользователь Zoom</span>
<span class="t" style="left:143.40px;top:142.00px;font-size:10.58px;color:#3a3a3a;letter-spacing:-0.500px;transform:scaleX(0.9338);transform-origin:0 0;">Главная</span>
<span class="t" style="left:223.60px;top:143.00px;font-size:9.56px;color:#fff;font-weight:700;">P</span>
<span class="t" style="left:237.00px;top:142.00px;font-size:10.58px;color:#333;letter-spacing:-0.500px;transform:scaleX(0.9883);transform-origin:0 0;">Лекция№1.pptx</span>
<span class="t" style="left:415.10px;top:143.00px;font-size:9.56px;color:#fff;font-weight:700;">P</span>
<span class="t" style="left:428.70px;top:142.00px;font-size:10.58px;color:#444;letter-spacing:-0.500px;transform:scaleX(0.9912);transform-origin:0 0;">Лекция№2.pptx</span>
<span class="t" style="left:1124.00px;top:142.00px;font-size:10.41px;color:#fff;letter-spacing:-0.500px;transform:scaleX(0.9930);transform-origin:0 0;">Обновить сейчас</span>
<span class="t" style="left:138.80px;top:169.00px;font-size:11.43px;color:#333;letter-spacing:-0.500px;transform:scaleX(0.8851);transform-origin:0 0;">Меню</span>
<span class="t" style="left:294.50px;top:169.00px;font-size:11.43px;color:#c8632a;font-weight:700;letter-spacing:-0.500px;transform:scaleX(0.9412);transform-origin:0 0;">Главная</span>
<span class="t" style="left:346.80px;top:169.00px;font-size:11.43px;color:#3a3a3a;letter-spacing:-0.500px;transform:scaleX(0.9378);transform-origin:0 0;">Вставка</span>
<span class="t" style="left:395.40px;top:169.00px;font-size:11.43px;color:#3a3a3a;letter-spacing:-0.361px;">Дизайн</span>
<span class="t" style="left:445.00px;top:169.00px;font-size:11.43px;color:#3a3a3a;letter-spacing:-0.500px;transform:scaleX(0.9845);transform-origin:0 0;">Переходы</span>
<span class="t" style="left:507.70px;top:169.00px;font-size:11.43px;color:#3a3a3a;letter-spacing:-0.475px;">Анимация</span>
<span class="t" style="left:572.00px;top:169.00px;font-size:11.43px;color:#3a3a3a;letter-spacing:-0.470px;">Показ слайдов</span>
<span class="t" style="left:658.20px;top:169.00px;font-size:11.43px;color:#3a3a3a;letter-spacing:-0.377px;">Рецензирование</span>
<span class="t" style="left:754.00px;top:169.00px;font-size:11.43px;color:#3a3a3a;letter-spacing:-0.500px;transform:scaleX(0.9048);transform-origin:0 0;">Вид</span>
<span class="t" style="left:783.30px;top:169.00px;font-size:11.43px;color:#3a3a3a;letter-spacing:-0.500px;transform:scaleX(0.9638);transform-origin:0 0;">Сервис</span>
<span class="t" style="left:838.60px;top:169.00px;font-size:11.43px;color:#c8632a;letter-spacing:-0.500px;transform:scaleX(0.9961);transform-origin:0 0;">Инструменты для студентов</span>
<span class="t" style="left:1012.00px;top:169.00px;font-size:11.43px;color:#333;letter-spacing:-0.500px;transform:scaleX(0.9496);transform-origin:0 0;">WPS AI</span>
<span class="t" style="left:1143.00px;top:170.00px;font-size:10.04px;color:#2f6fd6;letter-spacing:-0.500px;transform:scaleX(0.9901);transform-origin:0 0;">Поделиться</span>
<span class="t" style="left:153.70px;top:202.00px;font-size:10.19px;color:#333;letter-spacing:-0.113px;">Формат по  образцу</span>
<span class="t" style="left:153.70px;top:224.00px;font-size:10.19px;color:#333;letter-spacing:-0.500px;transform:scaleX(0.9666);transform-origin:0 0;">Вставить</span>
<span class="t" style="left:283.40px;top:224.00px;font-size:10.19px;color:#333;letter-spacing:-0.500px;transform:scaleX(0.9810);transform-origin:0 0;">С текущего слайда</span>
<span class="t" style="left:1089.40px;top:224.00px;font-size:10.19px;color:#333;letter-spacing:-0.500px;">Инструменты для студентов</span>
<span class="t" style="left:1230.80px;top:224.00px;font-size:10.19px;color:#333;letter-spacing:-0.417px;">Параметры</span>
<span class="t" style="left:165.30px;top:262.00px;font-size:9.73px;color:#333;letter-spacing:-0.476px;">Структура</span>
<span class="t" style="left:217.60px;top:262.00px;font-size:9.73px;color:#c8632a;letter-spacing:-0.500px;transform:scaleX(0.9707);transform-origin:0 0;">Слайды</span>
<span class="t" style="left:130.50px;top:297.00px;font-size:10.5px;color:#444;">1</span>
<span class="t" style="left:130.00px;top:389.00px;font-size:10.5px;color:#c8632a;">2</span>
<span class="t" style="left:130.00px;top:483.00px;font-size:10.5px;color:#454545;">3</span>
<span class="t" style="left:130.00px;top:577.00px;font-size:10.5px;color:#454545;">4</span>
<span class="t" style="left:130.00px;top:669.00px;font-size:10.5px;color:#454545;">5</span>
<span class="t" style="left:450.60px;top:296.00px;font-size:29.5px;color:#1b5463;font-weight:700;letter-spacing:1.940px;transform:scaleX(0.9100);transform-origin:0 0;-webkit-text-stroke:.4px #1b5463;">ЖОСПАР</span>
<span class="t" style="left:450.60px;top:331.00px;font-size:27.4px;color:#1c6373;font-weight:700;letter-spacing:0.300px;transform:scaleX(1.0158);transform-origin:0 0;-webkit-text-stroke:.35px #1c6373;">Дәріс №1. ҚР экологиялық саясаты және</span>
<span class="t" style="left:450.60px;top:362.00px;font-size:27.4px;color:#1c6373;font-weight:700;letter-spacing:0.300px;transform:scaleX(1.0168);transform-origin:0 0;-webkit-text-stroke:.35px #1c6373;">заңнамалық негіздері</span>
<span class="t" style="left:430.50px;top:420.00px;font-size:14.8px;color:#fff;font-weight:700;letter-spacing:0.099px;-webkit-text-stroke:.2px #fff;">Кіріспе</span>
<span class="t" style="left:431.00px;top:466.00px;font-size:14.8px;color:#fff;font-weight:700;letter-spacing:0.094px;-webkit-text-stroke:.2px #fff;">1.Экологиялық саясаттың маңызы</span>
<span class="t" style="left:431.00px;top:511.00px;font-size:14.8px;color:#fff;font-weight:700;letter-spacing:0.150px;transform:scaleX(1.0242);transform-origin:0 0;-webkit-text-stroke:.2px #fff;">2.Экологиялық құқық пен заңнама ұғымы</span>
<span class="t" style="left:429.20px;top:557.00px;font-size:14.8px;color:#fff;font-weight:700;letter-spacing:-0.176px;-webkit-text-stroke:.2px #fff;">Қорытынды</span>
<span class="t" style="left:29.00px;top:758.00px;font-size:9.8px;color:#eee;letter-spacing:-0.365px;">Звук</span>
<span class="t" style="left:95.40px;top:758.00px;font-size:9.8px;color:#eee;letter-spacing:-0.500px;transform:scaleX(0.9352);transform-origin:0 0;">Видео</span>
<span class="t" style="left:619.40px;top:740.00px;font-size:8.5px;color:#eee;letter-spacing:-0.500px;transform:scaleX(0.9589);transform-origin:0 0;">19</span>
<span class="t" style="left:585.80px;top:758.00px;font-size:9.8px;color:#eee;letter-spacing:-0.489px;">Участники</span>
<span class="t" style="left:682.00px;top:758.00px;font-size:9.8px;color:#eee;letter-spacing:-0.500px;transform:scaleX(0.9180);transform-origin:0 0;">Чат</span>
<span class="t" style="left:728.00px;top:758.00px;font-size:9.8px;color:#eee;letter-spacing:-0.494px;">Отреагировать</span>
<span class="t" style="left:808.00px;top:758.00px;font-size:9.8px;color:#eee;letter-spacing:-0.500px;transform:scaleX(0.9877);transform-origin:0 0;">Поделиться</span>
<span class="t" style="left:874.50px;top:758.00px;font-size:9.8px;color:#eee;letter-spacing:-0.360px;">Дополнительно</span>
<span class="t" style="left:1378.60px;top:758.00px;font-size:9.8px;color:#eee;letter-spacing:-0.500px;transform:scaleX(0.9328);transform-origin:0 0;">Выйти</span>
<span class="t" style="left:66.00px;top:783.00px;font-size:11.74px;color:#3a3a3a;letter-spacing:-0.383px;">Поиск</span>
<span class="t" style="left:518.80px;top:784.00px;font-size:8.49px;color:#fff;font-weight:700;letter-spacing:0.003px;">zm</span>
<span class="t" style="left:1317.00px;top:784.00px;font-size:8.79px;color:#f2f2f2;letter-spacing:-0.094px;">ҚАЗ</span>
<span class="t" style="left:1353.00px;top:777.00px;font-size:8.79px;color:#f2f2f2;letter-spacing:-0.496px;">14:18</span>
<span class="t" style="left:1343.70px;top:791.00px;font-size:8.79px;color:#f2f2f2;letter-spacing:-0.500px;transform:scaleX(0.9910);transform-origin:0 0;">19.05.2025</span>
<span class="t" style="left:1406.00px;top:792.00px;font-size:7.5px;color:#fff;">1</span>
</div>

</div>
</body>
</html>
